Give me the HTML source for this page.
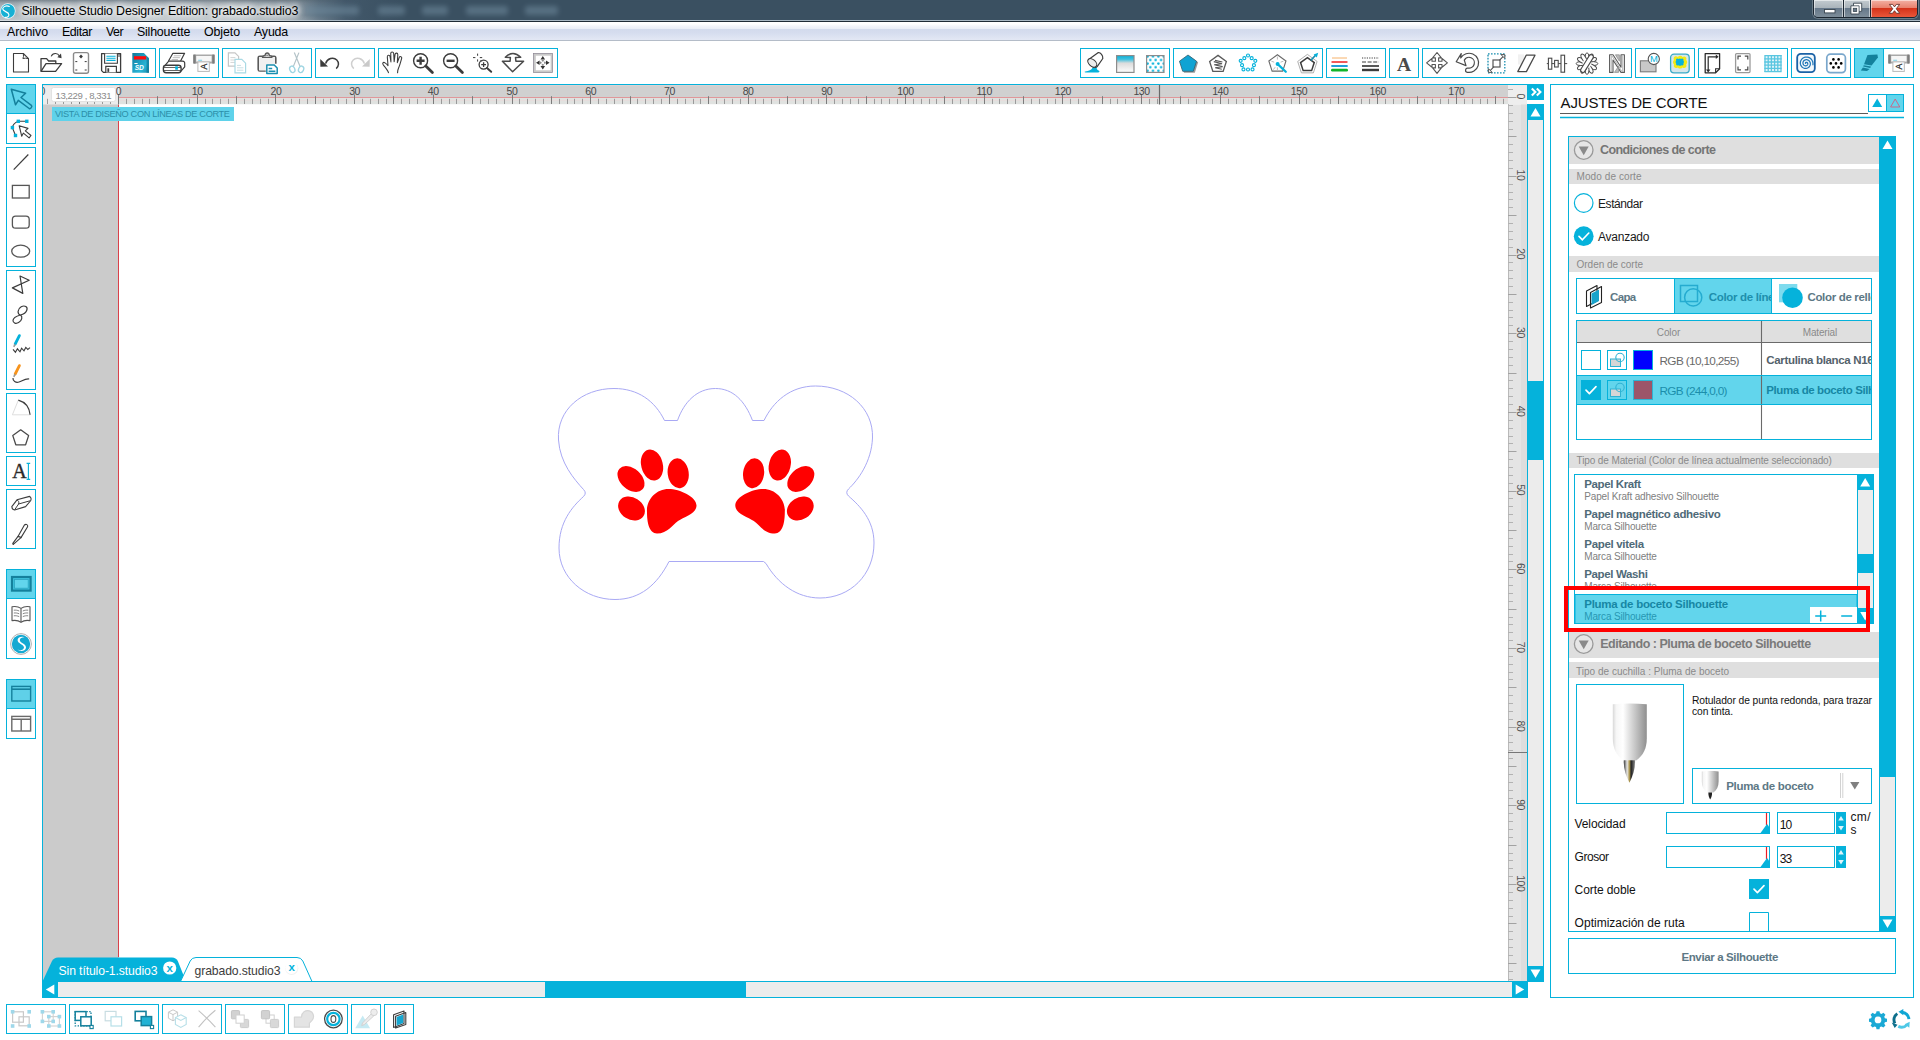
<!DOCTYPE html>
<html lang="es">
<head>
<meta charset="utf-8">
<title>Silhouette Studio Designer Edition: grabado.studio3</title>
<style>
*{box-sizing:border-box;margin:0;padding:0}
html,body{width:1920px;height:1040px;overflow:hidden;background:#fff;font-family:"Liberation Sans",sans-serif;color:#000}
.abs{position:absolute}
#titlebar{position:absolute;left:0;top:0;width:1920px;height:20px;background:linear-gradient(90deg,#aeb7bd 0,#b9c1c6 120px,#b0b9bf 240px,#8c9aa4 292px,#5b7080 318px,#42586a 345px,#3a5061 400px,#3a5061 100%);overflow:hidden}
#titlebar .shade{position:absolute;left:0;top:0;width:400px;height:20px;background:linear-gradient(180deg,rgba(70,85,98,.55) 0,rgba(90,105,118,.25) 3px,rgba(255,255,255,0) 7px,rgba(255,255,255,0) 15px,rgba(255,255,255,.12) 18px,rgba(255,255,255,.18) 20px);-webkit-mask-image:linear-gradient(90deg,#000 0,#000 280px,transparent 360px);mask-image:linear-gradient(90deg,#000 0,#000 280px,transparent 360px)}
#titlebar .ttl{position:absolute;left:21.500px;top:3.700px;font-size:12.400px;letter-spacing:-.14px;color:#000;white-space:nowrap;text-shadow:0 0 5px #fff,0 0 7px #fff,0 0 9px #fff,0 0 12px rgba(255,255,255,.8)}
#titlebar .blob{position:absolute;top:6px;height:9px;background:#6f8a9d;filter:blur(2.500px);opacity:.55;border-radius:3px}
#tline{position:absolute;left:0;top:20px;width:1920px;height:2px;background:linear-gradient(180deg,#a9b8c3 0,#a9b8c3 50%,#1f2b35 50%,#1f2b35 100%)}
#tline2{position:absolute;left:0;top:20px;width:330px;height:1px;background:linear-gradient(90deg,#d5dbdf 0,#d5dbdf 250px,#a9b8c3 100%)}
#menubar{position:absolute;left:0;top:22px;width:1920px;height:19px;background:linear-gradient(180deg,#ffffff 0,#ffffff 2px,#f3f5fa 4px,#e9edf6 7px,#d3dbed 7.500px,#d6ddef 11px,#e2e7f4 17.500px,#b4bcc8 18px,#b4bcc8 19px)}
#menubar span{position:absolute;top:3.100px;font-size:12.400px;letter-spacing:-.1px;white-space:nowrap}
#wc{position:absolute;left:1813px;top:-1px;width:105px;height:19px;border:1px solid #1b2732;border-radius:0 0 5px 5px;overflow:hidden;box-shadow:0 0 0 1px rgba(255,255,255,.25)}
#wc div{position:absolute;top:0;height:18px}
.wb{background:linear-gradient(180deg,#c3cbd0 0,#a9b3ba 8px,#66788a 8.500px,#7e8e9a 17px);box-shadow:inset 0 0 0 1px rgba(255,255,255,.55)}
.wx{background:linear-gradient(180deg,#f3b1a4 0,#e8806c 8px,#d4331a 8.500px,#e9573a 17px);box-shadow:inset 0 0 0 1px rgba(255,255,255,.5)}
.grp{position:absolute;border:1px solid #05b2db;background:#fff}
.ic{position:absolute;width:30px;height:30px}
.hl{background:#62d5ec;box-shadow:inset 0 0 0 1px #05b2db}
svg{display:block}
.ic svg{overflow:visible}
</style>
</head>
<body>
<!-- TITLE BAR -->
<div id="titlebar">
  <div class="shade"></div>
  <div class="blob" style="left:305px;width:54px"></div><div class="blob" style="left:378px;width:27px"></div><div class="blob" style="left:422px;width:26px"></div><div class="blob" style="left:466px;width:42px"></div><div class="blob" style="left:525px;width:33px"></div>
  <div class="ttl">Silhouette Studio Designer Edition: grabado.studio3</div>
  <svg class="abs" style="left:0;top:0" width="20" height="20" viewBox="0 0 20 20"><circle cx="7.900" cy="11" r="7.700" fill="#eafafd"/><circle cx="7.900" cy="11" r="7" fill="#16b0d4"/><path d="M9.300 6.400c-2.600-1.200-6.400-.2-6.600 2.400-.2 3 6 2.600 6.200 5.800.2 1.800-1.600 3-3.600 2.800" fill="none" stroke="#fff" stroke-width="1.100" stroke-linecap="round"/></svg>
</div>
<div id="tline"></div><div id="tline2"></div>
<div id="wc"><div class="wb" style="left:0;width:29px"></div><div style="left:29px;width:1px;background:#1b2732"></div><div class="wb" style="left:30px;width:26px"></div><div style="left:56px;width:1px;background:#1b2732"></div><div class="wx" style="left:57px;width:47px"></div>
<svg class="abs" style="left:0;top:0" width="104" height="18" viewBox="0 0 104 18"><rect x="10.500" y="9.500" width="10.500" height="3.400" fill="#fff" stroke="#3a4650" stroke-width=".9"/><path d="M39.500 3.200h8.200v8.200h-2.600v2.600h-8.200v-8.200h2.600z" fill="#fff" stroke="#3a4650" stroke-width=".9"/><rect x="39.300" y="8.300" width="3.400" height="3.200" fill="#66788a" stroke="#3a4650" stroke-width=".8"/><path d="M39.500 5.800h5.600v5.600" fill="none" stroke="#3a4650" stroke-width=".8"/><path d="M75.400 4.400h3.200l1.900 2.500 1.900-2.500h3.200l-3.400 4.400 3.500 4.500h-3.200l-2-2.600-2 2.600h-3.200l3.500-4.500z" fill="#fff" stroke="#5a2a24" stroke-width=".8" stroke-linejoin="round"/></svg></div>
<!-- MENU BAR -->
<div id="menubar">
  <span style="left:7px;letter-spacing:-.05px">Archivo</span><span style="left:62px;letter-spacing:-.4px">Editar</span><span style="left:106px;letter-spacing:-.5px">Ver</span><span style="left:137px;letter-spacing:-.2px">Silhouette</span><span style="left:204px;letter-spacing:-.09px">Objeto</span><span style="left:254px;letter-spacing:-.18px">Ayuda</span>
</div>
<div class="grp" style="left:6px;top:48px;width:150px;height:30px"><div class="ic" style="left:-1px;top:-1px"><svg width="30" height="30" viewBox="0 0 30 30"><path d="M7.500 5.500h9.800l5.200 5.200v13.300h-15z" fill="#fff" stroke="#3c3c3c" stroke-width="1.100" stroke-linejoin="round"/><path d="M17.300 5.500q.6 3.400-.4 5 2.600-.800 5.600.2" fill="none" stroke="#3c3c3c" stroke-width="1"/></svg></div><div class="ic" style="left:29px;top:-1px"><svg width="30" height="30" viewBox="0 0 30 30"><path d="M5 23.3V10.6h5.6l2 2.4h7.2v2.6" fill="none" stroke="#3c3c3c" stroke-width="1.3" stroke-linejoin="round"/><path d="M5 23.3l5-7.7h15.6l-6 7.7z" fill="#fff" stroke="#3c3c3c" stroke-width="1.3" stroke-linejoin="round"/><path d="M15.2 8.4c1.6-3.6 6.4-3.8 8.2-.4" fill="none" stroke="#3c3c3c" stroke-width="1.1"/><path d="M21.3 9.3l4.3.9-.6-4.6z" fill="#3c3c3c"/></svg></div><div class="ic" style="left:59px;top:-1px"><svg width="30" height="30" viewBox="0 0 30 30"><rect x="7.5" y="4.6" width="15" height="20.6" rx="2" fill="#fff" stroke="#8a8a8a" stroke-width="1.4"/><path d="M15 6.6l1.9 1.9-1.9 1.9-1.9-1.9z" fill="#3c3c3c"/><path d="M9.3 13.6h2M18.7 13.6h2M9.3 22h2M18.7 22h2" stroke="#3c3c3c" stroke-width="1"/></svg></div><div class="ic" style="left:89px;top:-1px"><svg width="30" height="30" viewBox="0 0 30 30"><path d="M5.6 5.6h19v18.8h-17.2l-1.8-1.8z" fill="#fff" stroke="#3c3c3c" stroke-width="1.3" stroke-linejoin="round"/><path d="M8.6 5.6v9.6h12.8v-9.6" fill="#fff" stroke="#3c3c3c" stroke-width="1.1"/><path d="M10.4 8.2h9.2M10.4 10.3h9.2M10.4 12.4h9.2" stroke="#05b2db" stroke-width="1.1"/><path d="M9.8 24.4v-6h10.6v6" fill="#fff" stroke="#3c3c3c" stroke-width="1.2"/><path d="M12.3 20.3v3.6" stroke="#3c3c3c" stroke-width="1.8"/><path d="M23 6v3" stroke="#3c3c3c" stroke-width="1"/></svg></div><div class="ic" style="left:119px;top:-1px"><svg width="30" height="30" viewBox="0 0 30 30"><defs><linearGradient id="sdg" x1="0" y1="0" x2="1" y2="1"><stop offset="0" stop-color="#12789a"/><stop offset=".45" stop-color="#1f9fc2"/><stop offset=".7" stop-color="#2ab6d6"/><stop offset="1" stop-color="#1688aa"/></linearGradient></defs><path d="M6.300 5.100h11.600l5.100 5.100v14.500h-16.700z" fill="url(#sdg)"/><path d="M20.600 8.200l2.400 2v14.500h-2.400z" fill="#117a9a" opacity=".75"/><rect x="8" y="8.200" width="12.200" height="3.300" fill="#ff0a0a"/><path d="M8.400 15.500h3.200" stroke="#fff" stroke-width="1"/><text x="8.700" y="22.200" font-family="Liberation Sans,sans-serif" font-weight="700" font-style="italic" font-size="6.600" fill="#fff" letter-spacing="-.1">SD</text></svg></div></div>
<div class="grp" style="left:159px;top:48px;width:60px;height:30px"><div class="ic" style="left:-1px;top:-1px"><svg width="30" height="30" viewBox="0 0 30 30"><path d="M9.5 13L13.9 5.3H25.6L21.6 13" fill="#fff" stroke="#3c3c3c" stroke-width="1.2" stroke-linejoin="round"/><path d="M14.8 7.8h7.2M13.7 9.7h7.200M12.600 11.600h6.400" stroke="#b4b4b4" stroke-width=".9"/><path d="M6.300 17.200L9.700 13.200H23.400Q26 13.300 25.700 15.700V18.800L22 23.200" fill="#fff" stroke="#3c3c3c" stroke-width="1.200" stroke-linejoin="round"/><path d="M4.400 19.900q0-2.700 2.700-2.700h12.300q2.700 0 2.700 2.700v2.200q0 2.700-2.700 2.700h-12.300q-2.700 0-2.700-2.700z" fill="#fff" stroke="#3c3c3c" stroke-width="1.400"/><path d="M4.800 19.500h17M4.800 22.500h17" stroke="#3c3c3c" stroke-width=".8"/><rect x="16.200" y="18.300" width="2.700" height="3.400" fill="#05b2db"/></svg></div><div class="ic" style="left:29px;top:-1px"><svg width="30" height="30" viewBox="0 0 30 30"><rect x="4.300" y="6.600" width="21.300" height="9" rx=".8" fill="#a9a9a9"/><rect x="4.300" y="6.600" width="2.300" height="9" fill="#7d7d7d"/><rect x="23.300" y="6.600" width="2.300" height="9" fill="#7d7d7d"/><rect x="7.200" y="8" width="15.400" height="5.600" fill="#f6f6f6"/><rect x="9.200" y="11.700" width="3.900" height="1.200" fill="#8fd8ea"/><rect x="8.900" y="13.900" width="11.400" height="9.500" fill="#fff" stroke="#b8b8b8" stroke-width="1"/><text transform="translate(17.800 21.400) rotate(-90)" font-family="Liberation Sans,sans-serif" font-size="8.800" fill="#2e2e2e" stroke="#2e2e2e" stroke-width=".3">A</text></svg></div></div>
<div class="grp" style="left:222px;top:48px;width:90px;height:30px"><div class="ic" style="left:-1px;top:-1px"><svg width="30" height="30" viewBox="0 0 30 30"><path d="M6.4 4.8h6.6l3.6 3.6v9.8h-10.2z" fill="#fff" stroke="#c6c6c6" stroke-width="1.2"/><path d="M8.4 9.6h5M8.4 12h6M8.4 14.4h6" stroke="#d4d4d4" stroke-width="1"/><path d="M13 11.4h6.8l3.8 3.8v9.6h-10.6z" fill="#fff" stroke="#a9d9e4" stroke-width="1.2"/><path d="M15 17.4h4M15 19.8h6.4M15 22.2h6.4" stroke="#c9dfe4" stroke-width="1"/></svg></div><div class="ic" style="left:29px;top:-1px"><svg width="30" height="30" viewBox="0 0 30 30"><path d="M12 8.2h-4.2q-1.6 0-1.6 1.6v11.6q0 1.6 1.6 1.6h6" fill="#f2f2f2" stroke="#5a5a5a" stroke-width="1.6"/><path d="M18.6 8.2h3.6q1.6 0 1.6 1.6v6" fill="none" stroke="#5a5a5a" stroke-width="1.6"/><rect x="7" y="9" width="16" height="13.4" fill="#f0f0f0"/><path d="M10.6 9.4q0-1.8 1.8-1.8h.6q.4-2.6 2.2-2.6t2.2 2.6h.6q1.8 0 1.8 1.8z" fill="#fff" stroke="#5a5a5a" stroke-width="1.4"/><path d="M14.2 7.2h2" stroke="#5a5a5a" stroke-width="1"/><path d="M14.8 17h7.4l3 3v5.6h-10.4z" fill="#fff" stroke="#1a8fb0" stroke-width="1.5" stroke-linejoin="round"/><path d="M16.6 20.6h3.6M16.6 23.2h6.8" stroke="#1a8fb0" stroke-width="1.5"/></svg></div><div class="ic" style="left:59px;top:-1px"><svg width="30" height="30" viewBox="0 0 30 30"><path d="M12.300 4.600l5.800 14M16.900 4.600l-5.600 14" stroke="#b4c3c8" stroke-width="1.200" fill="none"/><ellipse cx="10.300" cy="21.300" rx="2.500" ry="3.300" fill="none" stroke="#9fd5e2" stroke-width="1.300" transform="rotate(-25 10.300 21.300)"/><ellipse cx="19.100" cy="21.300" rx="2.500" ry="3.300" fill="none" stroke="#9fd5e2" stroke-width="1.300" transform="rotate(25 19.100 21.300)"/></svg></div></div>
<div class="grp" style="left:315px;top:48px;width:60px;height:30px"><div class="ic" style="left:-1px;top:-1px"><svg width="30" height="30" viewBox="0 0 30 30"><path d="M10.6 15.6c1.6-5.2 7.8-7 11.2-3.6 2.4 2.4 2.2 6.2-.6 8.6" fill="none" stroke="#3c3c3c" stroke-width="1.5"/><path d="M5.2 11l.2 7.8 7.6-.4z" fill="#3c3c3c"/></svg></div><div class="ic" style="left:29px;top:-1px"><svg width="30" height="30" viewBox="0 0 30 30"><path d="M19.4 15.6c-1.6-5.2-7.8-7-11.2-3.6-2.4 2.4-2.2 6.2.6 8.6" fill="none" stroke="#cfcfcf" stroke-width="1.5"/><path d="M24.8 11l-.2 7.8-7.6-.4z" fill="#c9c9c9"/></svg></div></div>
<div class="grp" style="left:378px;top:48px;width:180px;height:30px"><div class="ic" style="left:-1px;top:-1px"><svg width="30" height="30" viewBox="0 0 30 30"><path d="M10.4 24.6c-.6-2.2-2-3.8-4.4-6.600-1.400-1.600-.2-3 1.400-2 1 .6 1.800 1.400 2.600 2.400l-.6-7.600c-.2-1.800 2-2 2.400-.4l.8 4.800-.2-7.400c0-1.800 2.400-1.800 2.600 0l.4 7.200.8-6.400c.2-1.600 2.400-1.400 2.400.2l-.4 7 1.600-4.400c.6-1.600 2.600-.8 2.200.6-1 3.600-1.600 6.400-2.800 8.800-.6 1.200-.8 2.400-.8 3.800" fill="#fff" stroke="#3c3c3c" stroke-width=".95" stroke-linejoin="round" stroke-linecap="round" transform="translate(-1.400 -3.400) scale(1.140)"/></svg></div><div class="ic" style="left:29px;top:-1px"><svg width="30" height="30" viewBox="0 0 30 30"><circle cx="12.6" cy="12.8" r="7" fill="#fff" stroke="#3c3c3c" stroke-width="1.4"/><path d="M17.8 18l6.600 6.600" stroke="#3c3c3c" stroke-width="2.8" stroke-linecap="round"/><path d="M8.600 12.8h8M12.6 8.800v8" stroke="#3c3c3c" stroke-width="2.4"/></svg></div><div class="ic" style="left:59px;top:-1px"><svg width="30" height="30" viewBox="0 0 30 30"><circle cx="12.6" cy="12.8" r="7" fill="#fff" stroke="#3c3c3c" stroke-width="1.4"/><path d="M17.8 18l6.600 6.600" stroke="#3c3c3c" stroke-width="2.8" stroke-linecap="round"/><path d="M8.600 12.8h8" stroke="#3c3c3c" stroke-width="2.4"/></svg></div><div class="ic" style="left:89px;top:-1px"><svg width="30" height="30" viewBox="0 0 30 30"><circle cx="15.600" cy="16.600" r="4.500" fill="#fff" stroke="#3c3c3c" stroke-width="1.300"/><path d="M19 20l4.200 3.800" stroke="#3c3c3c" stroke-width="2" stroke-linecap="round"/><path d="M13.200 16.600h4.800M15.600 14.200v4.800" stroke="#3c3c3c" stroke-width="1.300"/><path d="M9.600 5.600v2.200M9.600 11.400v2.200M5 9.600h2.400M11.800 9.600h2.400M12.600 12.400l1.200 1.200" stroke="#3c3c3c" stroke-width="1"/></svg></div><div class="ic" style="left:119px;top:-1px"><svg width="30" height="30" viewBox="0 0 30 30"><path d="M7.3 9.3Q15 1.6 22.7 9.3L17.5 9.5L17.9 13.2L25.6 13.2L14.6 23.8L4.4 13.2L12.1 13.2L12.4 9.5Z" fill="#fff" stroke="#4a4a4a" stroke-width="1.5" stroke-linejoin="round"/></svg></div><div class="ic" style="left:149px;top:-1px"><svg width="30" height="30" viewBox="0 0 30 30"><rect x="5.4" y="5.4" width="19.2" height="19.2" fill="#c9c9c9" stroke="#8c8692" stroke-width=".7"/><rect x="7.8" y="7.7" width="14.8" height="14.6" fill="#fff"/><path d="M14.8 8l2.300 3.600h-4.600zM14.800 21.600l2.300-3.600h-4.600zM8 14.800l3.600-2.300v4.600zM21.600 14.800l-3.600-2.300v4.600z" fill="#333"/><path d="M14.800 11.600l1.500 1.100-1.500 1.100-1.500-1.100zM14.800 18l1.500-1.100-1.500-1.100-1.500 1.100zM11.600 14.800l1.100-1.500 1.100 1.500-1.100 1.500zM18 14.800l-1.100-1.500-1.100 1.500 1.100 1.500z" fill="#8a8a8a"/></svg></div></div>
<div class="grp" style="left:1080px;top:48px;width:90px;height:30px"><div class="ic" style="left:-1px;top:-1px"><svg width="30" height="30" viewBox="0 0 30 30"><path d="M5.200 23.600c3.600-.4 6.200-1.600 7.400-3.800l1.400-2.400 3 1.200c-.8 2-.2 3.400 2 4.200 1 .6.400 1.600-1 1.600h-12.400c-1.200 0-1.400-.6-.4-.8z" fill="#05b2db"/><path d="M8.300 11.700l9.700-7c2.600-.6 5.200 3 4.800 5.800l-5.800 8.300c-1.800 1-4 .4-6.200-1.600-2.200-2-3-4-2.500-5.500z" fill="#fff" stroke="#3c3c3c" stroke-width="1.200" stroke-linejoin="round"/><ellipse cx="12.300" cy="14.900" rx="3.300" ry="5.200" transform="rotate(-48 12.300 14.900)" fill="#ececec" stroke="#3c3c3c" stroke-width="1.100"/></svg></div><div class="ic" style="left:29px;top:-1px"><svg width="30" height="30" viewBox="0 0 30 30"><defs><linearGradient id="gr1" x1="0" y1="0" x2="0" y2="1"><stop offset="0" stop-color="#05b2db"/><stop offset=".22" stop-color="#3fc0de"/><stop offset=".45" stop-color="#dcdcdc"/><stop offset="1" stop-color="#fdfdfd"/></linearGradient></defs><rect x="6.600" y="7.600" width="17.400" height="16.800" fill="url(#gr1)" stroke="#8c8c8c" stroke-width="1.200"/></svg></div><div class="ic" style="left:59px;top:-1px"><svg width="30" height="30" viewBox="0 0 30 30"><defs><pattern id="pd1" x="6.200" y="7" width="5.400" height="7.200" patternUnits="userSpaceOnUse"><circle cx="1.400" cy="1.400" r="1.250" fill="#05b2db"/><circle cx="4.100" cy="5" r="1.250" fill="#05b2db"/></pattern></defs><rect x="6.600" y="7.600" width="17.400" height="16.800" fill="#fff"/><rect x="6.600" y="7.600" width="17.400" height="16.800" fill="url(#pd1)" stroke="#8c8c8c" stroke-width="1.200"/></svg></div></div>
<div class="grp" style="left:1173px;top:48px;width:150px;height:30px"><div class="ic" style="left:-1px;top:-1px"><svg width="30" height="30" viewBox="0 0 30 30"><path d="M16.40 8.00L25.15 14.36L21.81 24.64L10.99 24.64L7.65 14.36z" fill="#9a9a9a"/><path d="M15.00 7.00L23.56 13.22L20.29 23.28L9.71 23.28L6.44 13.22z" fill="#10a3d3" stroke="#2f5f70" stroke-width=".8"/></svg></div><div class="ic" style="left:29px;top:-1px"><svg width="30" height="30" viewBox="0 0 30 30"><path d="M15.00 7.40L23.37 13.48L20.17 23.32L9.83 23.32L6.63 13.48z" fill="#fff" stroke="#5a5a5a" stroke-width="1.300"/><path d="M10.800 13.600l8.200 2.200-7.800 1 8.400 1.800-7.400 1.200 6.600 1.400M12 12.400l7.400 1.600" fill="none" stroke="#555" stroke-width="1.100"/></svg></div><div class="ic" style="left:59px;top:-1px"><svg width="30" height="30" viewBox="0 0 30 30"><circle cx="15.00" cy="7.50" r="1.500" fill="#fff" stroke="#05b2db" stroke-width="1.150"/><circle cx="18.67" cy="10.14" r="1.500" fill="#fff" stroke="#05b2db" stroke-width="1.150"/><circle cx="22.32" cy="12.82" r="1.500" fill="#fff" stroke="#05b2db" stroke-width="1.150"/><circle cx="20.94" cy="17.13" r="1.500" fill="#fff" stroke="#05b2db" stroke-width="1.150"/><circle cx="19.53" cy="21.43" r="1.500" fill="#fff" stroke="#05b2db" stroke-width="1.150"/><circle cx="15.00" cy="21.45" r="1.500" fill="#fff" stroke="#05b2db" stroke-width="1.150"/><circle cx="10.47" cy="21.43" r="1.500" fill="#fff" stroke="#05b2db" stroke-width="1.150"/><circle cx="9.06" cy="17.13" r="1.500" fill="#fff" stroke="#05b2db" stroke-width="1.150"/><circle cx="7.68" cy="12.82" r="1.500" fill="#fff" stroke="#05b2db" stroke-width="1.150"/><circle cx="11.33" cy="10.14" r="1.500" fill="#fff" stroke="#05b2db" stroke-width="1.150"/></svg></div><div class="ic" style="left:89px;top:-1px"><svg width="30" height="30" viewBox="0 0 30 30"><path d="M14.40 6.80L22.96 13.02L19.69 23.08L9.11 23.08L5.84 13.02z" fill="#fff" stroke="#6a6a6a" stroke-width="1.100"/><path d="M14.400 8.600v3M8.400 13.200l2.800 1M20.400 13.200l-2.800 1M10.400 21.600l1.800-2.400M14.400 22.400v-3" stroke="#bdbdbd" stroke-width="1"/><circle cx="14.600" cy="16" r="2" fill="#05b2db"/><path d="M16 17.400l6.800 6.400" stroke="#05b2db" stroke-width="2.200" stroke-linecap="round"/></svg></div><div class="ic" style="left:119px;top:-1px"><svg width="30" height="30" viewBox="0 0 30 30"><path d="M14.40 6.40L24.10 13.45L20.40 24.85L8.40 24.85L4.70 13.45z" fill="#fff" stroke="#9a9a9a" stroke-width=".8"/><path d="M14.40 9.60L21.25 14.58L18.63 22.62L10.17 22.62L7.55 14.58z" fill="#fff" stroke="#3c3c3c" stroke-width="1.500"/><path d="M17.800 12.400l5.200-5.600" stroke="#1a8fb0" stroke-width="1.600"/><path d="M20.600 6.400l4.600-1.600-1.400 4.800z" fill="#05b2db"/></svg></div></div>
<div class="grp" style="left:1326px;top:48px;width:60px;height:30px"><div class="ic" style="left:-1px;top:-1px"><svg width="30" height="30" viewBox="0 0 30 30"><path d="M6 10h15" stroke="#f6b26b" stroke-width="1"/><path d="M6 14h15" stroke="#ee2222" stroke-width="1.400" stroke-linecap="round"/><path d="M6 18h15" stroke="#1f9fd9" stroke-width="1.800" stroke-linecap="round"/><path d="M6.400 22.200h14.200" stroke="#12b52a" stroke-width="2.800" stroke-linecap="round"/></svg></div><div class="ic" style="left:29px;top:-1px"><svg width="30" height="30" viewBox="0 0 30 30"><path d="M6 10h17" stroke="#3c3c3c" stroke-width="1" stroke-dasharray="1.200 1.200"/><path d="M6 14h17" stroke="#3c3c3c" stroke-width="1.200" stroke-dasharray="4 1.600"/><path d="M6 18h17" stroke="#3c3c3c" stroke-width="1.700"/><path d="M6 22h17" stroke="#3c3c3c" stroke-width="2.400"/></svg></div></div>
<div class="grp" style="left:1389px;top:48px;width:30px;height:30px"><div class="ic" style="left:-1px;top:-1px"><svg width="30" height="30" viewBox="0 0 30 30"><text x="15" y="22.800" text-anchor="middle" font-family="Liberation Serif,serif" font-weight="700" font-size="19.500" fill="#4a4a4a">A</text></svg></div></div>
<div class="grp" style="left:1422px;top:48px;width:210px;height:30px"><div class="ic" style="left:-1px;top:-1px"><svg width="30" height="30" viewBox="0 0 30 30"><path d="M15 4.500L19.400 9.900H16.600V13.300H20V10.500L25.400 14.900L20 19.300V16.500H16.600V19.900H19.400L15 25.300L10.600 19.900H13.400V16.500H10V19.300L4.600 14.900L10 10.500V13.300H13.400V9.900H10.600Z" fill="#fff" stroke="#555" stroke-width="1.100" stroke-linejoin="round"/></svg></div><div class="ic" style="left:29px;top:-1px"><svg width="30" height="30" viewBox="0 0 30 30"><path d="M8.700 10A9.600 9.600 0 1 1 15.300 24.300A2.100 2.100 0 0 1 16.100 20.100A5.400 5.400 0 1 0 12.300 12.100L14 17.600L4.200 13.800L9.200 5.600z" fill="#fff" stroke="#4a4a4a" stroke-width="1.200" stroke-linejoin="round"/></svg></div><div class="ic" style="left:59px;top:-1px"><svg width="30" height="30" viewBox="0 0 30 30"><rect x="6" y="5.800" width="16.800" height="19" fill="#fff" stroke="#1a8fb0" stroke-width="1.300" stroke-dasharray="1.600 1.400"/><rect x="11" y="12" width="7" height="7" fill="#fff" stroke="#555" stroke-width="1.200"/><path d="M17.400 12.400l4.600-4.800M12 18.600l-4.800 5" stroke="#555" stroke-width="1.100"/><path d="M19 6.600h3.800v3.800zM6.400 20.600v3.800h3.800z" fill="#fff" stroke="#555" stroke-width="1"/></svg></div><div class="ic" style="left:89px;top:-1px"><svg width="30" height="30" viewBox="0 0 30 30"><rect x="6" y="6.400" width="6" height="10" fill="#f1f1f1"/><path d="M14.200 7.200h8.800l-8.600 16.400h-8.600z" fill="#fff" stroke="#4a4a4a" stroke-width="1.300" stroke-linejoin="round"/></svg></div><div class="ic" style="left:119px;top:-1px"><svg width="30" height="30" viewBox="0 0 30 30"><path d="M4.800 15.600h20.400" stroke="#4a4a4a" stroke-width="1"/><rect x="6.400" y="10.200" width="3.400" height="11" fill="#fff" stroke="#4a4a4a" stroke-width="1.100"/><rect x="12.600" y="12.400" width="3.600" height="6.600" fill="#fff" stroke="#4a4a4a" stroke-width="1.100"/><rect x="19" y="7.200" width="3.600" height="17" fill="#fff" stroke="#4a4a4a" stroke-width="1.100"/></svg></div><div class="ic" style="left:149px;top:-1px"><svg width="30" height="30" viewBox="0 0 30 30"><ellipse cx="15" cy="9.400" rx="2" ry="4.600" transform="rotate(0 15 15.600)" fill="#fff" stroke="#4a4a4a" stroke-width="1"/><ellipse cx="15" cy="9.400" rx="2" ry="4.600" transform="rotate(30 15 15.600)" fill="#fff" stroke="#4a4a4a" stroke-width="1"/><ellipse cx="15" cy="9.400" rx="2" ry="4.600" transform="rotate(60 15 15.600)" fill="#fff" stroke="#4a4a4a" stroke-width="1"/><ellipse cx="15" cy="9.400" rx="2" ry="4.600" transform="rotate(90 15 15.600)" fill="#fff" stroke="#4a4a4a" stroke-width="1"/><ellipse cx="15" cy="9.400" rx="2" ry="4.600" transform="rotate(120 15 15.600)" fill="#fff" stroke="#4a4a4a" stroke-width="1"/><ellipse cx="15" cy="9.400" rx="2" ry="4.600" transform="rotate(150 15 15.600)" fill="#fff" stroke="#4a4a4a" stroke-width="1"/><ellipse cx="15" cy="9.400" rx="2" ry="4.600" transform="rotate(180 15 15.600)" fill="#fff" stroke="#4a4a4a" stroke-width="1"/><ellipse cx="15" cy="9.400" rx="2" ry="4.600" transform="rotate(210 15 15.600)" fill="#fff" stroke="#4a4a4a" stroke-width="1"/><ellipse cx="15" cy="9.400" rx="2" ry="4.600" transform="rotate(240 15 15.600)" fill="#fff" stroke="#4a4a4a" stroke-width="1"/><ellipse cx="15" cy="9.400" rx="2" ry="4.600" transform="rotate(270 15 15.600)" fill="#fff" stroke="#4a4a4a" stroke-width="1"/><ellipse cx="15" cy="9.400" rx="2" ry="4.600" transform="rotate(300 15 15.600)" fill="#fff" stroke="#4a4a4a" stroke-width="1"/><ellipse cx="15" cy="9.400" rx="2" ry="4.600" transform="rotate(330 15 15.600)" fill="#fff" stroke="#4a4a4a" stroke-width="1"/><circle cx="15" cy="15.600" r="4.400" fill="#fff"/><rect x="12.800" y="5.600" width="4.400" height="20" rx="2.200" transform="rotate(32 15 15.600)" fill="#fff" stroke="#4a4a4a" stroke-width="1.100"/></svg></div><div class="ic" style="left:179px;top:-1px"><svg width="30" height="30" viewBox="0 0 30 30"><path d="M7.600 24.400v-17.600h3.400l8 12.400v-12.400h3.400v17.600h-3.400l-8-12.400v12.400z" fill="#fff" stroke="#5a5a5a" stroke-width="1.100" stroke-linejoin="round"/><path d="M13.400 6.800h4v6.400zM12.400 24.400h4.200v-6.200z" fill="#bdbdbd" stroke="#8a8a8a" stroke-width=".7"/><path d="M9.300 7.400v16.400M20.700 7.400v16.400M10 8l10 15.600" stroke="#9a9a9a" stroke-width=".7" fill="none"/></svg></div></div>
<div class="grp" style="left:1635px;top:48px;width:60px;height:30px"><div class="ic" style="left:-1px;top:-1px"><svg width="30" height="30" viewBox="0 0 30 30"><path d="M5.400 12.600h12.400v11.200h-17.600 0h5.200z" fill="none"/><rect x="5.400" y="12.800" width="15.600" height="11" fill="#c8c8c8" stroke="#7a7a7a" stroke-width="1.100"/><circle cx="18.800" cy="11" r="5.600" fill="#fff" stroke="#555" stroke-width="1.100"/><text x="18.800" y="14.400" text-anchor="middle" font-family="Liberation Sans,sans-serif" font-size="9.400" fill="#05b2db">M</text></svg></div><div class="ic" style="left:29px;top:-1px"><svg width="30" height="30" viewBox="0 0 30 30"><rect x="5.600" y="6.200" width="18.600" height="18.600" rx="3.400" fill="#d6e6ea" stroke="#38a8c6" stroke-width="1.300"/><path d="M9 12c-1.400-3 2-4.800 3.800-3 1.400-1.600 3.600-1.600 4.800 0 2-1.600 4.800.2 3.600 3 1.400 1.200 1.400 3.200 0 4.400 1.200 2.800-1.800 4.600-3.800 3-1.200 1.600-3.400 1.600-4.600 0-2 1.600-5-.2-3.800-3-1.400-1.200-1.400-3.200 0-4.400z" fill="#f3ea12"/><path d="M11.200 12.600c-.8-1.800 1.200-2.800 2.400-1.600.8-.8 1.800-.8 2.600 0 1.200-1 2.800 0 2.200 1.600.8.800.8 2.200 0 3 .6 1.600-1 2.600-2.200 1.600-.8.800-1.800.8-2.600 0-1.200 1-3 0-2.400-1.600-.8-.8-.8-2.200 0-3z" fill="#05b2db"/></svg></div></div>
<div class="grp" style="left:1698px;top:48px;width:90px;height:30px"><div class="ic" style="left:-1px;top:-1px"><svg width="30" height="30" viewBox="0 0 30 30"><path d="M7.200 5.600h14.400v15.200l-4 4h-10.400z" fill="#fff" stroke="#2c2c2c" stroke-width="1.300" stroke-linejoin="round"/><path d="M17.600 24.800v-4h4" fill="none" stroke="#2c2c2c" stroke-width="1.100"/><path d="M10.200 22.600v-13.800h8.600" fill="none" stroke="#2c2c2c" stroke-width="1.200"/><path d="M17.800 6.600l2.800 2.200-2.800 2.200zM8 21.600l2.200 2.800 2.200-2.800z" fill="#2c2c2c"/></svg></div><div class="ic" style="left:29px;top:-1px"><svg width="30" height="30" viewBox="0 0 30 30"><rect x="7.600" y="5.600" width="14.400" height="19" rx="1" fill="#fff" stroke="#9a9a9a" stroke-width="1.300"/><path d="M10 11.400v-3.200h3M16.800 8.200h3v3.200M10 18.600v3.200h3M16.800 21.800h3v-3.200" fill="none" stroke="#4a4a4a" stroke-width="1.200"/></svg></div><div class="ic" style="left:59px;top:-1px"><svg width="30" height="30" viewBox="0 0 30 30"><rect x="6.400" y="7" width="17.200" height="17" fill="#e4f5fa"/><path d="M7.0 7v17M6.400 7.6h17.200" stroke="#5ac6e0" stroke-width="1.300"/><path d="M10.2 7v17M6.400 10.8h17.200" stroke="#5ac6e0" stroke-width="1.300"/><path d="M13.4 7v17M6.400 14.0h17.200" stroke="#5ac6e0" stroke-width="1.300"/><path d="M16.6 7v17M6.400 17.2h17.200" stroke="#5ac6e0" stroke-width="1.300"/><path d="M19.8 7v17M6.400 20.4h17.200" stroke="#5ac6e0" stroke-width="1.300"/><path d="M23.0 7v17M6.400 23.6h17.200" stroke="#5ac6e0" stroke-width="1.300"/></svg></div></div>
<div class="grp" style="left:1791px;top:48px;width:60px;height:30px"><div class="ic" style="left:-1px;top:-1px"><svg width="30" height="30" viewBox="0 0 30 30"><rect x="6.200" y="5.800" width="17.600" height="18.400" rx="3.600" fill="#f4f9fc" stroke="#1b62a6" stroke-width="1.800"/><path d="M15.00 15.40 L14.95 15.45 L14.87 15.48 L14.79 15.49 L14.70 15.47 L14.62 15.42 L14.55 15.34 L14.50 15.23 L14.47 15.11 L14.47 14.97 L14.51 14.83 L14.58 14.68 L14.69 14.55 L14.83 14.43 L15.01 14.34 L15.21 14.29 L15.43 14.27 L15.67 14.30 L15.91 14.38 L16.13 14.52 L16.34 14.70 L16.52 14.93 L16.65 15.20 L16.74 15.50 L16.76 15.83 L16.73 16.17 L16.63 16.50 L16.46 16.83 L16.22 17.13 L15.92 17.39 L15.57 17.60 L15.17 17.74 L14.74 17.81 L14.30 17.79 L13.85 17.70 L13.41 17.51 L13.00 17.24 L12.64 16.90 L12.34 16.48 L12.11 16.00 L11.98 15.47 L11.94 14.92 L12.00 14.36 L12.17 13.80 L12.45 13.27 L12.82 12.79 L13.29 12.37 L13.83 12.04 L14.44 11.82 L15.09 11.70 L15.77 11.70 L16.45 11.83 L17.10 12.08 L17.71 12.45 L18.26 12.94 L18.71 13.53 L19.06 14.20 L19.28 14.94 L19.37 15.72 L19.32 16.52 L19.12 17.31 L18.77 18.06 L18.29 18.74 L17.68 19.34 L16.96 19.82 L16.15 20.18 L15.29 20.38 L14.38 20.43 L13.47 20.31 L12.58 20.02 L11.74 19.57 L10.99 18.97 L10.35 18.24 L9.85 17.39 L9.50 16.45 L9.33 15.45 L9.34 14.42 L9.54 13.39 L9.92 12.41 L10.48 11.50 L11.20 10.69 L12.07 10.02 L13.06 9.51 L14.13 9.19 L15.26 9.05 L16.41 9.13 L17.54 9.41 L18.61 9.90 L19.59 10.58 L20.44 11.44 L21.13 12.44 L21.63 13.57 L21.93 14.78 L22.00 16.04 L21.85 17.30" fill="none" stroke="#2278b8" stroke-width="1.250"/></svg></div><div class="ic" style="left:29px;top:-1px"><svg width="30" height="30" viewBox="0 0 30 30"><rect x="5.800" y="6.200" width="18.600" height="18.400" rx="3.600" fill="#fff" stroke="#7aa7cc" stroke-width="1.700"/><circle cx="12.400" cy="11.400" r="1.300"/><circle cx="17.600" cy="11.400" r="1.300"/><circle cx="9.800" cy="15.400" r="1.300"/><circle cx="15" cy="15.400" r="1.300"/><circle cx="20.200" cy="15.400" r="1.300"/><circle cx="12.400" cy="19.400" r="1.300"/><circle cx="17.600" cy="19.400" r="1.300"/></svg></div></div>
<div class="grp" style="left:1854px;top:48px;width:60px;height:30px"><div class="ic hl" style="left:-1px;top:-1px"><svg width="30" height="30" viewBox="0 0 30 30"><path d="M13.500 7L23.400 6.600L23.900 9.600L17.600 17.600L10 16.200Z" fill="#13819c"/><path d="M9.700 17.200L17 18.600L16.200 19.900L9.200 18.500Z" fill="#13819c"/><path d="M8.900 19.500L15.600 20.900L13 23.100L6.800 22.600Z" fill="#13819c"/></svg></div><div class="ic" style="left:29px;top:-1px"><svg width="30" height="30" viewBox="0 0 30 30"><rect x="4.300" y="6.600" width="21.300" height="9" rx=".8" fill="#a9a9a9"/><rect x="4.300" y="6.600" width="2.300" height="9" fill="#7d7d7d"/><rect x="23.300" y="6.600" width="2.300" height="9" fill="#7d7d7d"/><rect x="7.200" y="8" width="15.400" height="5.600" fill="#f6f6f6"/><rect x="9.200" y="11.700" width="3.900" height="1.200" fill="#8fd8ea"/><rect x="8.900" y="13.900" width="11.400" height="9.500" fill="#fff" stroke="#b8b8b8" stroke-width="1"/><text transform="translate(17.800 21.400) rotate(-90)" font-family="Liberation Sans,sans-serif" font-size="8.800" fill="#2e2e2e" stroke="#2e2e2e" stroke-width=".3">A</text></svg></div></div>

<div class="grp" style="left:6px;top:84px;width:30px;height:60px"><div class="ic hl" style="left:-1px;top:-1px"><svg width="30" height="30" viewBox="0 0 30 30"><path d="M5.300 5.300l14.300 4-4.600 4.200 10.400 7.900c1.200 1-.8 3.900-2.200 3.100l-10.900-8.200-2.800 4.500z" fill="none" stroke="#14809c" stroke-width="1.500" stroke-linejoin="round"/></svg></div><div class="ic" style="left:-1px;top:29px"><svg width="30" height="30" viewBox="0 0 30 30"><path d="M20.800 7.300h-8.500c-3.400 1.200-5.400 3.400-5.900 6.300l3.100 7.900" fill="none" stroke="#3c3c3c" stroke-width="1.100"/><rect x="10.600" y="5.600" width="3.400" height="3.400" fill="#05b2db"/><rect x="19.100" y="5.600" width="3.400" height="3.400" fill="#05b2db"/><rect x="4.700" y="11.900" width="3.400" height="3.400" fill="#05b2db"/><rect x="7.800" y="19.800" width="3.400" height="3.400" fill="#05b2db"/><path d="M13.200 11.800l8.800 2.600-2.700 2.400 5.700 4.700-1.900 2.300-5.700-4.700-1.700 3.100z" fill="#fff" stroke="#3c3c3c" stroke-width="1.100" stroke-linejoin="round"/></svg></div></div>
<div class="grp" style="left:6px;top:147px;width:30px;height:120px"><div class="ic" style="left:-1px;top:-1px"><svg width="30" height="30" viewBox="0 0 30 30"><path d="M7.700 22.600l14.600-15.100" stroke="#3c3c3c" stroke-width="1.200"/></svg></div><div class="ic" style="left:-1px;top:29px"><svg width="30" height="30" viewBox="0 0 30 30"><rect x="6.400" y="8.400" width="16.800" height="12.600" fill="#fff" stroke="#555" stroke-width="1.300"/></svg></div><div class="ic" style="left:-1px;top:59px"><svg width="30" height="30" viewBox="0 0 30 30"><rect x="6.400" y="9.200" width="16.800" height="12" rx="3.200" fill="#fff" stroke="#555" stroke-width="1.300"/></svg></div><div class="ic" style="left:-1px;top:89px"><svg width="30" height="30" viewBox="0 0 30 30"><ellipse cx="14.700" cy="14.200" rx="9" ry="6" fill="#fff" stroke="#555" stroke-width="1.300"/></svg></div></div>
<div class="grp" style="left:6px;top:270px;width:30px;height:120px"><div class="ic" style="left:-1px;top:-1px"><svg width="30" height="30" viewBox="0 0 30 30"><path d="M14 6l9.200 4.200-16.800 7.700 10.400 5.500z" fill="none" stroke="#3c3c3c" stroke-width="1.200" stroke-linejoin="round"/></svg></div><div class="ic" style="left:-1px;top:29px"><svg width="30" height="30" viewBox="0 0 30 30"><path d="M14.400 15c-3.400-1-3-6 .8-8.200 3.600-2 6.800.2 5.600 3.400-1 2.800-4.200 4.200-6.400 4.800-3.600 1-7.200 2.400-7.400 5.400-.2 3 3.200 3.600 5.600 2.200 3.400-2 4.400-6 1.800-7.600z" fill="none" stroke="#3c3c3c" stroke-width="1.200"/></svg></div><div class="ic" style="left:-1px;top:59px"><svg width="30" height="30" viewBox="0 0 30 30"><path d="M13.4 5.6l-4.2 8.4" stroke="#05b2db" stroke-width="2.8" stroke-linecap="round"/><path d="M9 14.2l-1.2 2.6" stroke="#999" stroke-width="1.6"/><path d="M7 19.4l2.4 2.8 2-3.400 2.6 3 1.6-3.6 2.4 2.6 1.8-3.4 2 2 2.2-1.8" fill="none" stroke="#3c3c3c" stroke-width="1.100"/></svg></div><div class="ic" style="left:-1px;top:89px"><svg width="30" height="30" viewBox="0 0 30 30"><path d="M13.400 5.600l-4.200 8.400" stroke="#f7941d" stroke-width="2.800" stroke-linecap="round"/><path d="M9 14.200l-1.200 2.600" stroke="#999" stroke-width="1.600"/><path d="M7 18c-.4 3 2.800 5 6 4 3.600-1.200 5.600-3.400 10.200-3" fill="none" stroke="#3c3c3c" stroke-width="1.200"/></svg></div></div>
<div class="grp" style="left:6px;top:393px;width:30px;height:60px"><div class="ic" style="left:-1px;top:-1px"><svg width="30" height="30" viewBox="0 0 30 30"><path d="M12.300 7.200l-5.900 14.600h17.700" fill="none" stroke="#dedede" stroke-width="1"/><path d="M12.300 7.200c6.600 1.800 11 7 11.800 14.600" fill="none" stroke="#3c3c3c" stroke-width="1.200"/></svg></div><div class="ic" style="left:-1px;top:29px"><svg width="30" height="30" viewBox="0 0 30 30"><path d="M14.700 6.800l7.900 5.800-3 9.200h-9.800l-3-9.200z" fill="#fff" stroke="#4a4a4a" stroke-width="1.300" stroke-linejoin="round"/></svg></div></div>
<div class="grp" style="left:6px;top:456px;width:30px;height:30px"><div class="ic" style="left:-1px;top:-1px"><svg width="30" height="30" viewBox="0 0 30 30"><text x="6.2" y="22.2" font-family="Liberation Serif,serif" font-size="20" fill="#2a2a2a" stroke="#2a2a2a" stroke-width=".35">A</text><path d="M22.4 7.4v16M20.6 7.4h3.6M20.6 23.4h3.600" stroke="#05b2db" stroke-width="1.100"/></svg></div></div>
<div class="grp" style="left:6px;top:489px;width:30px;height:60px"><div class="ic" style="left:-1px;top:-1px"><svg width="30" height="30" viewBox="0 0 30 30"><path d="M5.800 17.600l5.200-6.800 12.600-3.400c1.800 1 1.800 3.200.8 4.600l-4.800 5.600-11 3.400c-1.800-.4-2.800-1.800-2.800-3.400z" fill="#fff" stroke="#3c3c3c" stroke-width="1.100" stroke-linejoin="round"/><path d="M11 10.800c1.600.8 2.200 2.400 1.600 4.200l-4 5.800M12.600 15l11.400-3.200" fill="none" stroke="#3c3c3c" stroke-width="1"/></svg></div><div class="ic" style="left:-1px;top:29px"><svg width="30" height="30" viewBox="0 0 30 30"><path d="M18.400 6c1.800-1.400 3.800-.2 3.200 1.800l-6.600 10.800-3-1.200z" fill="#fff" stroke="#3c3c3c" stroke-width="1.100" stroke-linejoin="round"/><path d="M12 17.400l3 1.200-7.400 6.600c-.6.400-1-.2-.8-.8z" fill="#fff" stroke="#3c3c3c" stroke-width="1.100" stroke-linejoin="round"/></svg></div></div>
<div class="grp" style="left:6px;top:569px;width:30px;height:90px"><div class="ic hl" style="left:-1px;top:-1px"><svg width="30" height="30" viewBox="0 0 30 30"><rect x="6" y="8" width="18.600" height="13.600" fill="#3fc2dd" stroke="#14809c" stroke-width="2.200"/><rect x="8.400" y="10.400" width="13.800" height="8.800" fill="#62d5ec" stroke="#2ba3c0" stroke-width=".8"/></svg></div><div class="ic" style="left:-1px;top:29px"><svg width="30" height="30" viewBox="0 0 30 30"><path d="M15 9.400c-2.600-1.800-5.600-2.200-9-1.600v13.800c3.400-.6 6.400-.2 9 1.600 2.600-1.800 5.600-2.200 9-1.600v-13.800c-3.400-.6-6.400-.2-9 1.600z" fill="#fff" stroke="#555" stroke-width="1.100" stroke-linejoin="round"/><path d="M15 9.400v13.800" stroke="#555" stroke-width="1.100"/><path d="M7.800 11.200c1.800-.2 3.600 0 5.400.8M7.800 14c1.800-.2 3.600 0 5.400.8M7.800 16.800c1.800-.2 3.600 0 5.400.8M22.200 11.200c-1.800-.2-3.600 0-5.400.8M22.200 14c-1.800-.2-3.600 0-5.400.8M22.200 16.800c-1.800-.2-3.600 0-5.400.8" fill="none" stroke="#777" stroke-width=".9"/></svg></div><div class="ic" style="left:-1px;top:59px"><svg width="30" height="30" viewBox="0 0 30 30"><circle cx="15" cy="15" r="10.400" fill="#fff" stroke="#9a9a9a" stroke-width=".8"/><circle cx="15" cy="15" r="9.200" fill="#14a9d2"/><path d="M19.400 8.400c-3.400-1.600-7.400-.6-7.800 2.400-.5 4 6.600 4.400 6.400 7.800-.2 2.400-3.400 3.400-6.600 2 2.400 2.200 8 1.800 8.600-1.800.6-4.200-6.400-4.800-6.200-7.800.2-2 2.800-3 5.600-2.600z" fill="#fff"/></svg></div></div>
<div class="grp" style="left:6px;top:679px;width:30px;height:60px"><div class="ic hl" style="left:-1px;top:-1px"><svg width="30" height="30" viewBox="0 0 30 30"><rect x="5.800" y="7.400" width="18.800" height="14.600" fill="#5fd0e8" stroke="#14809c" stroke-width="1.400"/><path d="M5.800 10.200h18.800" stroke="#14809c" stroke-width="1.600"/></svg></div><div class="ic" style="left:-1px;top:29px"><svg width="30" height="30" viewBox="0 0 30 30"><rect x="5.800" y="7.400" width="18.800" height="14.600" fill="#fff" stroke="#6a6a6a" stroke-width="1.400"/><path d="M5.800 10.200h18.800M15.200 10.200v11.800" stroke="#6a6a6a" stroke-width="1.400"/></svg></div></div>

<!-- CANVAS -->
<div class="abs" style="left:43px;top:85px;width:76px;height:896px;background:#cbcbcb"></div>
<svg class="abs" style="left:0;top:0" width="1920" height="1040" viewBox="0 0 1920 1040">
  <!-- page art -->
  <path d="M583.500 489.500C574 479 560 463 558.500 440C556.500 410 582 388.500 614 388.500C638 388.500 655 401 664.500 420.500L677.500 420.500C684 402 697 388.500 715.500 388.500C733 388.500 745 401 752.500 420.500L764 420.500C773 402 790 386 815.500 386C848 386 873.500 408 872.500 438C871.500 462 858 480 848.500 489Q845 492.500 848.500 496C860 506 874 520 874 543C874 575 850 598 820 598C797 598 778 584 766 563.500L763.500 561.500L669 561.500C657 585 640 599.500 615 599.500C585 599.500 559 578 559 548C559 522 572 507 583.500 496.500Q587 493 583.500 489.500z" fill="none" stroke="#a9a9f4" stroke-width="1"/>
  <g fill="#ff0000"><path d="M647 512C646 500 656 489 668.500 489C680 489 697 497 696.500 506C696 514 684 517 678 521C672 525 668 533.500 657 533.500C649 533.500 647 522 647 512z"/><ellipse cx="631" cy="479" rx="15.500" ry="10.500" transform="rotate(42 631 479)"/><ellipse cx="652" cy="465" rx="10.800" ry="15.800" transform="rotate(-14 652 465)"/><ellipse cx="678.200" cy="473.300" rx="10.500" ry="15" transform="rotate(-8 678.200 473.300)"/><ellipse cx="631.500" cy="508.500" rx="14.200" ry="11" transform="rotate(32 631.500 508.500)"/></g>
  <g fill="#ff0000" transform="translate(1431.800 0) scale(-1 1)"><path d="M647 512C646 500 656 489 668.500 489C680 489 697 497 696.500 506C696 514 684 517 678 521C672 525 668 533.500 657 533.500C649 533.500 647 522 647 512z"/><ellipse cx="631" cy="479" rx="15.500" ry="10.500" transform="rotate(42 631 479)"/><ellipse cx="652" cy="465" rx="10.800" ry="15.800" transform="rotate(-14 652 465)"/><ellipse cx="678.200" cy="473.300" rx="10.500" ry="15" transform="rotate(-8 678.200 473.300)"/><ellipse cx="631.500" cy="508.500" rx="14.200" ry="11" transform="rotate(32 631.500 508.500)"/></g>
  <!-- page edge -->
  <path d="M118.500 104.500V957" stroke="#d9414a" stroke-width="1"/>
  <!-- horizontal ruler -->
  <rect x="43" y="85" width="76" height="19.500" fill="#ececec"/>
  <rect x="119" y="85" width="1389" height="12.500" fill="#d0d0d0"/>
  <rect x="119" y="97.500" width="1389" height="6.700" fill="#e0e2e0"/>
  <rect x="1508" y="85" width="19" height="19.500" fill="#eeeeee"/>
  <path d="M119 97.500H1508" stroke="#e08d92" stroke-width=".9"/><path d="M119 100.300H1508" stroke="#ecd6d6" stroke-width=".6"/><path d="M43 85.600H1508" stroke="#e6d2d2" stroke-width=".7"/>
  <path d="M47.5 98.800v5.200M55.5 98.800v5.200M63.5 98.800v5.200M71.5 98.800v5.200M87.5 98.800v5.200M94.5 98.800v5.200M102.5 98.800v5.200M110.5 98.800v5.200M126.5 98.800v5.200M134.5 98.800v5.200M142.5 98.800v5.200M149.5 98.800v5.200M165.5 98.800v5.200M173.5 98.800v5.200M181.5 98.800v5.200M189.5 98.800v5.200M205.5 98.800v5.200M212.5 98.800v5.200M220.5 98.800v5.200M228.5 98.800v5.200M244.5 98.800v5.200M252.5 98.800v5.200M260.5 98.800v5.200M268.5 98.800v5.200M283.5 98.800v5.200M291.5 98.800v5.200M299.5 98.800v5.200M307.5 98.800v5.200M323.5 98.800v5.200M330.5 98.800v5.200M338.5 98.800v5.200M346.5 98.800v5.200M362.5 98.800v5.200M370.5 98.800v5.200M378.5 98.800v5.200M386.5 98.800v5.200M401.5 98.800v5.200M409.5 98.800v5.200M417.5 98.800v5.200M425.5 98.800v5.200M441.5 98.800v5.200M449.5 98.800v5.200M456.5 98.800v5.200M464.5 98.800v5.200M480.5 98.800v5.200M488.5 98.800v5.200M496.5 98.800v5.200M504.5 98.800v5.200M519.5 98.800v5.200M527.5 98.800v5.200M535.5 98.800v5.200M543.5 98.800v5.200M559.5 98.800v5.200M567.5 98.800v5.200M574.5 98.800v5.200M582.5 98.800v5.200M598.5 98.800v5.200M606.5 98.800v5.200M614.5 98.800v5.200M622.5 98.800v5.200M637.5 98.800v5.200M645.5 98.800v5.200M653.5 98.800v5.200M661.5 98.800v5.200M677.5 98.800v5.200M685.5 98.800v5.200M693.5 98.800v5.200M700.5 98.800v5.200M716.5 98.800v5.200M724.5 98.800v5.200M732.5 98.800v5.200M740.5 98.800v5.200M755.5 98.800v5.200M763.5 98.800v5.200M771.5 98.800v5.200M779.5 98.800v5.200M795.5 98.800v5.200M803.5 98.800v5.200M811.5 98.800v5.200M818.5 98.800v5.200M834.5 98.800v5.200M842.5 98.800v5.200M850.5 98.800v5.200M858.5 98.800v5.200M874.5 98.800v5.200M881.5 98.800v5.200M889.5 98.800v5.200M897.5 98.800v5.200M913.5 98.800v5.200M921.5 98.800v5.200M929.5 98.800v5.200M936.5 98.800v5.200M952.5 98.800v5.200M960.5 98.800v5.200M968.5 98.800v5.200M976.5 98.800v5.200M992.5 98.800v5.200M999.5 98.800v5.200M1007.5 98.800v5.200M1015.5 98.800v5.200M1031.5 98.800v5.200M1039.5 98.800v5.200M1047.5 98.800v5.200M1055.5 98.800v5.200M1070.5 98.800v5.200M1078.5 98.800v5.200M1086.5 98.800v5.200M1094.5 98.800v5.200M1110.5 98.800v5.200M1117.5 98.800v5.200M1125.5 98.800v5.200M1133.5 98.800v5.200M1149.5 98.800v5.200M1157.5 98.800v5.200M1165.5 98.800v5.200M1173.5 98.800v5.200M1188.5 98.800v5.200M1196.5 98.800v5.200M1204.5 98.800v5.200M1212.5 98.800v5.200M1228.5 98.800v5.200M1236.5 98.800v5.200M1243.5 98.800v5.200M1251.5 98.800v5.200M1267.5 98.800v5.200M1275.5 98.800v5.200M1283.5 98.800v5.200M1291.5 98.800v5.200M1306.5 98.800v5.200M1314.5 98.800v5.200M1322.5 98.800v5.200M1330.5 98.800v5.200M1346.5 98.800v5.200M1354.5 98.800v5.200M1361.5 98.800v5.200M1369.5 98.800v5.200M1385.5 98.800v5.200M1393.5 98.800v5.200M1401.5 98.800v5.200M1409.5 98.800v5.200M1424.5 98.800v5.200M1432.5 98.800v5.200M1440.5 98.800v5.200M1448.5 98.800v5.200M1464.5 98.800v5.200M1472.5 98.800v5.200M1480.5 98.800v5.200M1487.5 98.800v5.200M1503.5 98.800v5.200" stroke="#9a9a9a" stroke-width="1"/>
  <path d="M79.5 96.200v7.800M118.5 94.500v9.500M157.5 96.200v7.800M197.5 94.500v9.500M236.5 96.200v7.800M275.5 94.500v9.500M315.5 96.200v7.800M354.5 94.500v9.500M393.5 96.200v7.800M433.5 94.500v9.500M472.5 96.200v7.800M512.5 94.500v9.500M551.5 96.200v7.800M590.5 94.500v9.500M630.5 96.200v7.800M669.5 94.500v9.500M708.5 96.200v7.800M748.5 94.500v9.500M787.5 96.200v7.800M826.5 94.500v9.500M866.5 96.200v7.800M905.5 94.500v9.500M944.5 96.200v7.800M984.5 94.500v9.500M1023.5 96.200v7.800M1062.5 94.500v9.500M1102.5 96.200v7.800M1141.5 94.500v9.500M1180.5 96.200v7.800M1220.5 94.500v9.500M1259.5 96.200v7.800M1299.5 94.500v9.500M1338.5 96.200v7.800M1377.5 94.500v9.500M1417.5 96.200v7.800M1456.5 94.500v9.500M1495.5 96.200v7.800" stroke="#7c7c7c" stroke-width="1"/>
  <path d="M118.500 96v8.500" stroke="#777" stroke-width="1"/>
  <path d="M1159.500 85v19.500" stroke="#6a6a6a" stroke-width="1.200"/>
  <g font-family="Liberation Sans,sans-serif" font-size="10.500" fill="#484848" text-anchor="middle" letter-spacing="-.4"><text x="118.5" y="95">0</text><text x="197.2" y="95">10</text><text x="275.9" y="95">20</text><text x="354.6" y="95">30</text><text x="433.3" y="95">40</text><text x="512.0" y="95">50</text><text x="590.7" y="95">60</text><text x="669.4" y="95">70</text><text x="748.1" y="95">80</text><text x="826.8" y="95">90</text><text x="905.5" y="95">100</text><text x="984.2" y="95">110</text><text x="1062.9" y="95">120</text><text x="1141.6" y="95">130</text><text x="1220.3" y="95">140</text><text x="1299.0" y="95">150</text><text x="1377.7" y="95">160</text><text x="1456.4" y="95">170</text></g>
  <!-- vertical ruler -->
  <rect x="1508" y="104.500" width="19" height="876.500" fill="#e4e4e4"/>
  <rect x="1521" y="104.500" width="6" height="876.500" fill="#dddddd"/>
  <path d="M1508.500 104V981" stroke="#b9b9b9" stroke-width="1"/>
  <path d="M1508 89.5h5M1508 105.5h5M1508 113.5h5M1508 121.5h5M1508 129.5h5M1508 144.5h5M1508 152.5h5M1508 160.5h5M1508 168.5h5M1508 184.5h5M1508 192.5h5M1508 199.5h5M1508 207.5h5M1508 223.5h5M1508 231.5h5M1508 239.5h5M1508 247.5h5M1508 262.5h5M1508 270.5h5M1508 278.5h5M1508 286.5h5M1508 302.5h5M1508 310.5h5M1508 317.5h5M1508 325.5h5M1508 341.5h5M1508 349.5h5M1508 357.5h5M1508 365.5h5M1508 380.5h5M1508 388.5h5M1508 396.5h5M1508 404.5h5M1508 420.5h5M1508 428.5h5M1508 436.5h5M1508 443.5h5M1508 459.5h5M1508 467.5h5M1508 475.5h5M1508 483.5h5M1508 498.5h5M1508 506.5h5M1508 514.5h5M1508 522.5h5M1508 538.5h5M1508 546.5h5M1508 554.5h5M1508 561.5h5M1508 577.5h5M1508 585.5h5M1508 593.5h5M1508 601.5h5M1508 617.5h5M1508 624.5h5M1508 632.5h5M1508 640.5h5M1508 656.5h5M1508 664.5h5M1508 672.5h5M1508 679.5h5M1508 695.5h5M1508 703.5h5M1508 711.5h5M1508 719.5h5M1508 735.5h5M1508 742.5h5M1508 750.5h5M1508 758.5h5M1508 774.5h5M1508 782.5h5M1508 790.5h5M1508 798.5h5M1508 813.5h5M1508 821.5h5M1508 829.5h5M1508 837.5h5M1508 853.5h5M1508 860.5h5M1508 868.5h5M1508 876.5h5M1508 892.5h5M1508 900.5h5M1508 908.5h5M1508 916.5h5M1508 931.5h5M1508 939.5h5M1508 947.5h5M1508 955.5h5M1508 971.5h5M1508 979.5h5" stroke="#b2b2b2" stroke-width="1"/>
  <path d="M1508 97.5h8.500M1508 136.5h8.500M1508 176.5h8.500M1508 215.5h8.500M1508 255.5h8.500M1508 294.5h8.500M1508 333.5h8.500M1508 373.5h8.500M1508 412.5h8.500M1508 451.5h8.500M1508 491.5h8.500M1508 530.5h8.500M1508 569.5h8.500M1508 609.5h8.500M1508 648.5h8.500M1508 687.5h8.500M1508 727.5h8.500M1508 766.5h8.500M1508 805.5h8.500M1508 845.5h8.500M1508 884.5h8.500M1508 923.5h8.500M1508 963.5h8.500" stroke="#a2a2a2" stroke-width="1"/>
  <path d="M1508 752.500h19" stroke="#777" stroke-width="1"/>
  <g font-family="Liberation Sans,sans-serif" font-size="10.500" fill="#505050" text-anchor="middle" letter-spacing="-.4"><text transform="translate(1517.400 96.3) rotate(90)" x="0" y="0">0</text><text transform="translate(1517.400 175.0) rotate(90)" x="0" y="0">10</text><text transform="translate(1517.400 253.7) rotate(90)" x="0" y="0">20</text><text transform="translate(1517.400 332.4) rotate(90)" x="0" y="0">30</text><text transform="translate(1517.400 411.1) rotate(90)" x="0" y="0">40</text><text transform="translate(1517.400 489.8) rotate(90)" x="0" y="0">50</text><text transform="translate(1517.400 568.5) rotate(90)" x="0" y="0">60</text><text transform="translate(1517.400 647.2) rotate(90)" x="0" y="0">70</text><text transform="translate(1517.400 725.9) rotate(90)" x="0" y="0">80</text><text transform="translate(1517.400 804.6) rotate(90)" x="0" y="0">90</text><text transform="translate(1517.400 883.3) rotate(90)" x="0" y="0">100</text></g>
  <!-- coordinate box -->
  <rect x="51.500" y="87.500" width="64" height="14" rx="2" fill="#fff" stroke="#e2e2e2"/>
  <text x="55.500" y="98.600" font-family="Liberation Sans,sans-serif" font-size="9.600" fill="#8a8a8a" textLength="56">13,229 , 8,331</text>
  <svg overflow="hidden" style="overflow:hidden" x="43" y="85" width="10" height="15" viewBox="43 85 10 15"><text x="39.600" y="95" font-family="Liberation Sans,sans-serif" font-size="10.500" fill="#484848">0</text></svg>
  <!-- view label -->
  <rect x="52" y="107" width="182" height="14" fill="#5fd2ea"/>
  <text x="55" y="116.900" font-family="Liberation Sans,sans-serif" font-size="9.200" fill="#2c8fa9" textLength="175">VISTA DE DISEÑO CON LÍNEAS DE CORTE</text>
  <!-- frame -->
  <path d="M42.500 84V998M42 84.500H1544" stroke="#05b2db" stroke-width="1"/>
  <!-- v scrollbar -->
  <rect x="1527" y="104" width="17" height="878" fill="#ececec"/>
  <path d="M1527.500 104V982M1543.500 104V982" stroke="#05b2db" stroke-width="1"/>
  <rect x="1527" y="100" width="17" height="4" fill="#fff"/>
  <rect x="1527" y="84" width="17" height="16" fill="#05b2db"/>
  <path d="M1531.800 88.400l3.600 3.600-3.600 3.600M1536.800 88.400l3.600 3.600-3.600 3.600" fill="none" stroke="#fff" stroke-width="2.100"/>
  <rect x="1527" y="104" width="17" height="16" fill="#05b2db"/>
  <path d="M1535.500 108l5 8.500h-10z" fill="#fff"/>
  <rect x="1527" y="381" width="17" height="79" fill="#05b2db"/>
  <rect x="1527" y="966" width="17" height="16" fill="#05b2db"/>
  <path d="M1535.500 978l5-8.500h-10z" fill="#fff"/>
  <!-- h scrollbar -->
  <rect x="42" y="981" width="1486" height="17" fill="#ececec"/>
  <path d="M42 981.500H1528M42 997.500H1528" stroke="#05b2db" stroke-width="1"/>
  <rect x="42" y="981" width="16" height="17" fill="#05b2db"/>
  <path d="M45.800 989.500l8.500-5v10z" fill="#fff"/>
  <rect x="1512" y="981" width="16" height="17" fill="#05b2db"/>
  <path d="M1524.200 989.500l-8.500-5v10z" fill="#fff"/>
  <rect x="545" y="981" width="201" height="17" fill="#05b2db"/>
  <!-- tabs -->
  <path d="M42.500 981.500L52 961Q54 957.500 58 957.500H172Q176 957.500 177.800 961L186 981.500z" fill="#05b2db"/>
  <path d="M180.500 981.500L190.200 961Q192 957.500 196 957.500H297Q301 957.500 302.800 961L312 981.500z" fill="#fff" stroke="#05b2db" stroke-width="1"/>
  <text x="58.500" y="974.600" font-family="Liberation Sans,sans-serif" font-size="12.200" fill="#fff" textLength="99">Sin título-1.studio3</text>
  <text x="194.500" y="974.600" font-family="Liberation Sans,sans-serif" font-size="12.200" fill="#3c3c3c" textLength="86">grabado.studio3</text>
  <circle cx="169.700" cy="968" r="6.600" fill="#fff"/>
  <text x="169.700" y="971.600" text-anchor="middle" font-family="Liberation Sans,sans-serif" font-weight="700" font-size="11.500" fill="#05b2db">x</text>
  <circle cx="291.700" cy="968.300" r="6.600" fill="#f1f1f1"/><circle cx="291.400" cy="967.600" r="6.300" fill="#fff"/>
  <text x="291.700" y="971.200" text-anchor="middle" font-family="Liberation Sans,sans-serif" font-weight="700" font-size="11.500" fill="#05b2db">x</text>
</svg>

<div class="grp" style="left:6px;top:1004px;width:60px;height:30px"><div class="ic" style="left:-1px;top:-1px"><svg width="30" height="30" viewBox="0 0 30 30"><rect x="6.600" y="7.800" width="10.800" height="10.400" fill="none" stroke="#c9c9c9" stroke-width="1.200"/><rect x="13" y="12.800" width="10.200" height="9" fill="none" stroke="#c9c9c9" stroke-width="1.200"/><rect x="4.80" y="6.00" width="3.6" height="3.6" fill="#9fd8ea"/><rect x="21.40" y="6.00" width="3.6" height="3.6" fill="#9fd8ea"/><rect x="4.80" y="20.20" width="3.6" height="3.6" fill="#9fd8ea"/><rect x="21.40" y="20.20" width="3.6" height="3.6" fill="#9fd8ea"/></svg></div><div class="ic" style="left:29px;top:-1px"><svg width="30" height="30" viewBox="0 0 30 30"><rect x="6.400" y="7.800" width="10.800" height="9.600" fill="none" stroke="#d2d2d2" stroke-width="1.100"/><rect x="12.800" y="12.600" width="10.600" height="9.400" fill="none" stroke="#d2d2d2" stroke-width="1.100"/><rect x="4.60" y="6.00" width="3.6" height="3.6" fill="#9fd8ea"/><rect x="15.40" y="6.00" width="3.6" height="3.6" fill="#9fd8ea"/><rect x="4.60" y="15.60" width="3.6" height="3.6" fill="#9fd8ea"/><rect x="15.40" y="15.60" width="3.6" height="3.6" fill="#9fd8ea"/><rect x="11.00" y="10.80" width="3.6" height="3.6" fill="#9fd8ea"/><rect x="21.60" y="10.80" width="3.6" height="3.6" fill="#9fd8ea"/><rect x="11.00" y="20.20" width="3.6" height="3.6" fill="#9fd8ea"/><rect x="21.60" y="20.20" width="3.6" height="3.6" fill="#9fd8ea"/></svg></div></div>
<div class="grp" style="left:69px;top:1004px;width:90px;height:30px"><div class="ic" style="left:-1px;top:-1px"><svg width="30" height="30" viewBox="0 0 30 30"><rect x="6.200" y="7.600" width="15.800" height="14.200" fill="none" stroke="#14809c" stroke-width="1.300" stroke-dasharray="1.400 1.400"/><rect x="6.200" y="7.600" width="10.800" height="8.800" fill="#fff" stroke="#14809c" stroke-width="1.500"/><rect x="11.800" y="12.800" width="10.400" height="9" fill="#fff" stroke="#14809c" stroke-width="1.500"/><rect x="21" y="21.400" width="3.200" height="3.200" fill="#fff" stroke="#14809c" stroke-width="1.100"/></svg></div><div class="ic" style="left:29px;top:-1px"><svg width="30" height="30" viewBox="0 0 30 30"><rect x="6.200" y="7.400" width="10.800" height="9.400" fill="#fff" stroke="#c8dde2" stroke-width="1.200"/><rect x="12" y="12.800" width="10.600" height="9.200" fill="#fff" stroke="#b6dfe8" stroke-width="1.200"/></svg></div><div class="ic" style="left:59px;top:-1px"><svg width="30" height="30" viewBox="0 0 30 30"><rect x="6.200" y="7.400" width="10.800" height="9.400" fill="#fff" stroke="#14809c" stroke-width="1.600"/><rect x="12.200" y="12.600" width="10.400" height="9" fill="#22b2d4" stroke="#14809c" stroke-width="1.500"/><rect x="21.400" y="21.400" width="3.200" height="3.200" fill="#fff" stroke="#14809c" stroke-width="1.100"/></svg></div></div>
<div class="grp" style="left:162px;top:1004px;width:60px;height:30px"><div class="ic" style="left:-1px;top:-1px"><svg width="30" height="30" viewBox="0 0 30 30"><path d="M11 5.800l4.600 2.400v6l-4.600 2.600-4.600-2.600v-6z" fill="#fff" stroke="#c9c9c9" stroke-width="1"/><path d="M6.400 8.200l4.600 2.400 4.600-2.400M11 10.600v6" fill="none" stroke="#c9c9c9" stroke-width="1"/><path d="M18.800 10.800l5.400 2.800v6.800l-5.400 3-5.400-3v-6.800z" fill="#fff" stroke="#b7dfe8" stroke-width="1.100"/><path d="M13.400 13.600l5.400 2.800 5.400-2.800" fill="none" stroke="#b7dfe8" stroke-width="1.100"/></svg></div><div class="ic" style="left:29px;top:-1px"><svg width="30" height="30" viewBox="0 0 30 30"><path d="M6.600 6.600c5 4.400 11 10 16.800 16.600M23.400 6.200c-6 4.800-11.600 10.600-16.800 17" fill="none" stroke="#c2c2c2" stroke-width="1.100"/></svg></div></div>
<div class="grp" style="left:225px;top:1004px;width:60px;height:30px"><div class="ic" style="left:-1px;top:-1px"><svg width="30" height="30" viewBox="0 0 30 30"><rect x="6.400" y="6.600" width="8.200" height="8.200" rx="1" fill="#d2d2d2" stroke="#c4c4c4"/><rect x="15.400" y="15.400" width="8.200" height="8.200" rx="1" fill="#d8d8d8" stroke="#cccccc"/><rect x="11" y="11" width="8.200" height="8.200" fill="#fff" stroke="#d0d0d0"/></svg></div><div class="ic" style="left:29px;top:-1px"><svg width="30" height="30" viewBox="0 0 30 30"><rect x="11" y="11" width="8.200" height="8.200" fill="#fff" stroke="#d0d0d0"/><rect x="6.400" y="6.600" width="8.200" height="8.200" rx="1" fill="#d2d2d2" stroke="#c4c4c4"/><rect x="15.400" y="15.400" width="8.200" height="8.200" rx="1" fill="#d8d8d8" stroke="#cccccc"/></svg></div></div>
<div class="grp" style="left:288px;top:1004px;width:60px;height:30px"><div class="ic" style="left:-1px;top:-1px"><svg width="30" height="30" viewBox="0 0 30 30"><path d="M6.400 13.200h7c.2-4.800 4.200-7.400 8-6.400 4.200 1.200 5.400 6.400 2.600 9.600l-2.600 2.800v4h-15z" fill="#e4e4e4" stroke="#d6d6d6" stroke-width="1.200" stroke-linejoin="round"/></svg></div><div class="ic" style="left:29px;top:-1px"><svg width="30" height="30" viewBox="0 0 30 30"><circle cx="15.400" cy="15" r="8.800" fill="#fff" stroke="#4a4a4a" stroke-width="1.300"/><circle cx="15.400" cy="15" r="6.200" fill="#fff" stroke="#05b2db" stroke-width="2.200"/><ellipse cx="15.400" cy="15" rx="2.400" ry="3.400" fill="#fff" stroke="#4a4a4a" stroke-width="1.100"/></svg></div></div>
<div class="grp" style="left:351px;top:1004px;width:30px;height:30px"><div class="ic" style="left:-1px;top:-1px"><svg width="30" height="30" viewBox="0 0 30 30"><path d="M11.7 11.5l7.4 12.700h-14.900z" fill="#c6eaf3"/><path d="M20.300 9.800l2.400 2.200-9.400 8.600-2.600 1 .8-2.600z" fill="#ececec" stroke="#d2d2d2" stroke-width="1"/><circle cx="23" cy="8.300" r="3.300" fill="#ededed" stroke="#d2d2d2" stroke-width="1"/></svg></div></div>
<div class="grp" style="left:384px;top:1004px;width:30px;height:30px"><div class="ic" style="left:-1px;top:-1px"><svg width="30" height="30" viewBox="0 0 30 30"><path d="M9.600 10.800l10.400-3.800v12.600l-10.400 3.800z" fill="#fff" stroke="#3c3c3c" stroke-width="1.100" stroke-linejoin="round"/><path d="M11.600 12.200l10.200-3.600v11.800l-10.200 3.600z" fill="none" stroke="#3c3c3c" stroke-width="1.100" stroke-linejoin="round"/><path d="M12.600 12.900l6.600-2.400v8.600l-6.600 2.400z" fill="#15a6d0"/></svg></div></div>

<!-- RIGHT PANEL -->
<svg class="abs" style="left:0;top:0" width="1920" height="1040" viewBox="0 0 1920 1040" font-family="Liberation Sans,sans-serif">
<rect x="1550.5" y="84.5" width="363" height="913" fill="#fff" stroke="#05b2db" stroke-width="1"/>
<text x="1560.5" y="107.6" font-size="15" fill="#111" textLength="147.0" lengthAdjust="spacing">AJUSTES DE CORTE</text>
<path d="M1560 113.500H1868" stroke="#5a5a5a" stroke-width="1"/><path d="M1560 117.500H1904" stroke="#05b2db" stroke-width="1.400"/>
<rect x="1886" y="95" width="18" height="17" fill="#62d5ec"/>
<rect x="1868.5" y="94.5" width="35" height="17" fill="none" stroke="#05b2db" stroke-width="1"/>
<path d="M1886.500 94v18" stroke="#05b2db"/><path d="M1877.200 98.500l5 8.500h-10z" fill="#05b2db"/><path d="M1895.200 99l4.600 8h-9.200z" fill="none" stroke="#c9688a" stroke-width="1"/>
<rect x="1568.5" y="136.5" width="327" height="795" fill="#fff" stroke="#05b2db" stroke-width="1"/>
<rect x="1879" y="137" width="17" height="794" fill="#ececec"/>
<rect x="1879" y="137" width="17" height="640" fill="#05b2db"/>
<path d="M1879.500 777V916" stroke="#05b2db"/><path d="M1895.500 137V931" stroke="#05b2db"/><path d="M1887.500 140.500l5 8.500h-10z" fill="#fff"/><rect x="1879" y="916" width="17" height="16" fill="#05b2db"/>
<path d="M1887.500 928l5-8.500h-10z" fill="#fff"/>
<rect x="1569" y="137" width="310" height="27" fill="#dfdfdf"/>
<circle cx="1583.7" cy="150" r="9.300" fill="#e6e6e6" stroke="#9a9a9a" stroke-width="1.300"/><path d="M1578.7 146.4h10l-5 8.800z" fill="#8a8a8a"/>
<text x="1600" y="154.4" font-size="12.5" font-weight="700" fill="#757575" textLength="116.0" lengthAdjust="spacing">Condiciones de corte</text>
<rect x="1569" y="169" width="310" height="15" fill="#dfdfdf"/>
<text x="1576.5" y="180" font-size="10" fill="#8a8a8a" textLength="65.0" lengthAdjust="spacing">Modo de corte</text>
<circle cx="1583.700" cy="203" r="9.300" fill="#fff" stroke="#05b2db" stroke-width="1.200"/>
<text x="1598" y="207.6" font-size="12" fill="#1a1a1a" textLength="45.0" lengthAdjust="spacing">Estándar</text>
<circle cx="1583.700" cy="236.200" r="9.900" fill="#05b2db"/><path d="M1579 236.400l3.400 3.400 6.400-6.800" fill="none" stroke="#fff" stroke-width="1.650" stroke-linecap="round" stroke-linejoin="round"/>
<text x="1598" y="240.8" font-size="12" fill="#1a1a1a" textLength="51.5" lengthAdjust="spacing">Avanzado</text>
<rect x="1569" y="256" width="310" height="16" fill="#dfdfdf"/>
<text x="1576.5" y="268" font-size="10" fill="#8a8a8a" textLength="66.5" lengthAdjust="spacing">Orden de corte</text>
<rect x="1674" y="279" width="98" height="34" fill="#62d5ec"/>
<rect x="1576.5" y="278.5" width="295" height="35" fill="none" stroke="#05b2db" stroke-width="1"/>
<path d="M1674.500 278v36M1771.500 278v36" stroke="#05b2db"/>
<path d="M1586.500 291l10.500-5.500v15.500l-10.500 5.500z" fill="#fff" stroke="#222" stroke-width="1.100" stroke-linejoin="round"/><path d="M1590.500 292.500l11-6v16l-11 5.500z" fill="none" stroke="#222" stroke-width="1.100" stroke-linejoin="round"/><path d="M1591.500 293.500l7.500-4v11.500l-7.500 4z" fill="#17a3cb"/>
<text x="1610.1" y="301" font-size="11.5" font-weight="700" fill="#5d7885" textLength="26.0" lengthAdjust="spacing">Capa</text>
<rect x="1680.500" y="285.500" width="17" height="16" fill="none" stroke="#25acd0" stroke-width="1.500"/><circle cx="1693.200" cy="297.400" r="8.600" fill="none" stroke="#25acd0" stroke-width="1.500"/>
<svg overflow="hidden" style="overflow:hidden" x="1700" y="279" width="71" height="34" viewBox="1700 279 71 34"><text x="1708.7" y="301" font-size="11.5" font-weight="700" fill="#1d8fac" textLength="71.9" lengthAdjust="spacing">Color de línea</text>
</svg>
<rect x="1779" y="284" width="18.300" height="18.300" fill="#7edbee"/><circle cx="1792.500" cy="297.800" r="10.300" fill="#05b2db"/>
<svg overflow="hidden" style="overflow:hidden" x="1800" y="279" width="71" height="34" viewBox="1800 279 71 34"><text x="1807.4" y="301" font-size="11.5" font-weight="700" fill="#5d7885" textLength="82.7" lengthAdjust="spacing">Color de relleno</text>
</svg>
<rect x="1577" y="321" width="294" height="21" fill="#dfdfdf"/>
<rect x="1577" y="375" width="294" height="30" fill="#62d5ec"/>
<rect x="1576.5" y="320.5" width="295" height="119" fill="none" stroke="#05b2db" stroke-width="1"/>
<path d="M1577 342.500h294M1761.500 321v118" stroke="#6a6a6a" stroke-width="1.100"/><path d="M1577 375.500h294M1577 404.500h294" stroke="#05b2db" stroke-width="1"/>
<text x="1668.5" y="336" font-size="10" text-anchor="middle" fill="#8a8a8a" textLength="23.5" lengthAdjust="spacing">Color</text>
<text x="1820" y="336" font-size="10" text-anchor="middle" fill="#8a8a8a" textLength="34.5" lengthAdjust="spacing">Material</text>
<rect x="1581.5" y="350.5" width="19" height="19" fill="#fff" stroke="#05b2db" stroke-width="1"/>
<rect x="1607.5" y="350.5" width="19" height="19" fill="none" stroke="#05b2db" stroke-width="1"/>
<rect x="1610.5" y="359" width="10" height="7.500" fill="#d6d6d6" stroke="#2fb3d3" stroke-width="1"/><circle cx="1620" cy="357.5" r="4.200" fill="none" stroke="#2fb3d3" stroke-width="1.100"/>
<rect x="1633.5" y="350.5" width="19" height="19" fill="#0000ff" stroke="#05b2db" stroke-width="1"/>
<text x="1659.5" y="365.4" font-size="11.8" fill="#6a6a6a" textLength="80.0" lengthAdjust="spacing">RGB (10,10,255)</text>
<svg overflow="hidden" style="overflow:hidden" x="1762" y="343" width="109" height="96" viewBox="1762 343 109 96"><text x="1766.3" y="363.5" font-size="11.5" font-weight="700" fill="#54626b" textLength="113.5" lengthAdjust="spacing">Cartulina blanca N165</text>
<text x="1766.3" y="393.7" font-size="11.5" font-weight="700" fill="#1787a4" textLength="141.0" lengthAdjust="spacing">Pluma de boceto Silhouette</text>
</svg>
<rect x="1581" y="380" width="20" height="20" fill="#05b2db"/>
<path d="M1586 390.2l3.400 3.400 6.600-7" fill="none" stroke="#fff" stroke-width="1.650" stroke-linecap="round" stroke-linejoin="round"/>
<rect x="1607.5" y="380.5" width="19" height="19" fill="none" stroke="#05b2db" stroke-width="1"/>
<rect x="1610.5" y="389" width="10" height="7.500" fill="#d6d6d6" stroke="#2fb3d3" stroke-width="1"/><circle cx="1620" cy="387.5" r="4.200" fill="none" stroke="#2fb3d3" stroke-width="1.100"/>
<rect x="1633.5" y="380.5" width="19" height="19" fill="#9c5569" stroke="#2fb3d3" stroke-width="1"/>
<text x="1659.5" y="395.4" font-size="11.8" fill="#1b8eab" textLength="68.0" lengthAdjust="spacing">RGB (244,0,0)</text>
<rect x="1569" y="453" width="310" height="15" fill="#dfdfdf"/>
<text x="1576.5" y="464" font-size="10" fill="#8a8a8a" textLength="255.4" lengthAdjust="spacing">Tipo de Material (Color de línea actualmente seleccionado)</text>
<rect x="1574.5" y="474.5" width="299" height="149" fill="#fff" stroke="#05b2db" stroke-width="1"/>
<text x="1584.3" y="487.9" font-size="11.5" font-weight="700" fill="#4f6a78" textLength="56.7" lengthAdjust="spacing">Papel Kraft</text>
<text x="1584.3" y="500.0" font-size="10" fill="#808080" textLength="134.8" lengthAdjust="spacing">Papel Kraft adhesivo Silhouette</text>
<text x="1584.3" y="517.9" font-size="11.5" font-weight="700" fill="#4f6a78" textLength="136.5" lengthAdjust="spacing">Papel magnético adhesivo</text>
<text x="1584.3" y="530.0" font-size="10" fill="#808080" textLength="72.6" lengthAdjust="spacing">Marca Silhouette</text>
<text x="1584.3" y="547.9" font-size="11.5" font-weight="700" fill="#4f6a78" textLength="59.8" lengthAdjust="spacing">Papel vitela</text>
<text x="1584.3" y="560.0" font-size="10" fill="#808080" textLength="72.6" lengthAdjust="spacing">Marca Silhouette</text>
<text x="1584.3" y="577.9" font-size="11.5" font-weight="700" fill="#4f6a78" textLength="63.6" lengthAdjust="spacing">Papel Washi</text>
<text x="1584.3" y="590.0" font-size="10" fill="#808080" textLength="72.6" lengthAdjust="spacing">Marca Silhouette</text>
<rect x="1575" y="594.5" width="282" height="29" fill="#62d5ec" stroke="#05b2db" stroke-width="1"/>
<text x="1584.3" y="607.9" font-size="11.5" font-weight="700" fill="#1787a4" textLength="143.9" lengthAdjust="spacing">Pluma de boceto Silhouette</text>
<text x="1584.3" y="620" font-size="10" fill="#2797b3" textLength="72.6" lengthAdjust="spacing">Marca Silhouette</text>
<rect x="1857" y="475" width="16" height="148" fill="#ececec"/>
<path d="M1857.500 475v148" stroke="#05b2db"/><rect x="1857" y="475" width="16" height="15" fill="#05b2db"/>
<path d="M1865.200 478l5 8.500h-10z" fill="#fff"/><rect x="1857" y="554" width="16" height="19" fill="#05b2db"/>
<rect x="1857" y="608" width="16" height="15" fill="#05b2db"/>
<path d="M1865.200 620.500l5-8.500h-10z" fill="#fff"/><rect x="1810" y="607" width="47" height="16" fill="#fff"/>
<path d="M1815.200 616h11M1820.700 610.500v11M1841.200 616h11" stroke="#05b2db" stroke-width="1.500"/>
<rect x="1569" y="632" width="310" height="26" fill="#dfdfdf"/>
<circle cx="1583.7" cy="644" r="9.300" fill="#e6e6e6" stroke="#9a9a9a" stroke-width="1.300"/><path d="M1578.7 640.4h10l-5 8.800z" fill="#8a8a8a"/>
<text x="1600.2" y="648" font-size="12.5" font-weight="700" fill="#7a7a7a" textLength="211.0" lengthAdjust="spacing">Editando : Pluma de boceto Silhouette</text>
<rect x="1566" y="588" width="302" height="42" fill="none" stroke="#ff0000" stroke-width="4"/>
<rect x="1569" y="662" width="310" height="16" fill="#dfdfdf"/>
<text x="1576" y="675" font-size="10" fill="#8a8a8a" textLength="153.0" lengthAdjust="spacing">Tipo de cuchilla : Pluma de boceto</text>
<rect x="1576.5" y="684.5" width="107" height="119" fill="#fff" stroke="#05b2db" stroke-width="1"/>
<defs><linearGradient id="pg1" x1="0" y1="0" x2="1" y2="0"><stop offset="0" stop-color="#d8d8d8"/><stop offset=".1" stop-color="#f6f6f6"/><stop offset=".3" stop-color="#ffffff"/><stop offset=".6" stop-color="#cfcfcf"/><stop offset="1" stop-color="#8f8f8f"/></linearGradient>
<linearGradient id="pg2" x1="0" y1="0" x2="1" y2="0"><stop offset="0" stop-color="#3a3a3a"/><stop offset=".3" stop-color="#e8e8e8"/><stop offset=".5" stop-color="#b09a50"/><stop offset=".65" stop-color="#222"/><stop offset="1" stop-color="#888"/></linearGradient></defs>
<path d="M1612.800 704.200c11-1 23-1 34 0v34c0 10-3.600 17.400-10.600 22.200h-12.800c-7-4.800-10.600-12.200-10.600-22.200z" fill="url(#pg1)"/>
<path d="M1623.800 760.200h11.200c.4 8-2 15.600-5.600 22.600-3.600-7-6-14.600-5.600-22.600z" fill="url(#pg2)"/>
<text x="1692" y="703.6" font-size="10.3" fill="#111" textLength="180.0" lengthAdjust="spacing" word-spacing="0">Rotulador de punta redonda, para trazar</text>
<text x="1692" y="714.6" font-size="10.3" fill="#111" textLength="41.0" lengthAdjust="spacing">con tinta.</text>
<rect x="1692.5" y="768.5" width="179" height="35" fill="#fff" stroke="#05b2db" stroke-width="1"/>
<path d="M1701.800 771.400c5.600-.6 11.200-.6 16.800 0v10c0 5-1.800 8.600-5.200 11h-6.400c-3.400-2.400-5.200-6-5.200-11z" fill="url(#pg1)"/><path d="M1708.400 792.400h3.600c.2 2.600-.6 5-1.800 7.200-1.200-2.200-2-4.600-1.800-7.200z" fill="#222"/>
<text x="1726.2" y="790.4" font-size="11.5" font-weight="700" fill="#5d7885" textLength="87.7" lengthAdjust="spacing">Pluma de boceto</text>
<path d="M1840.500 773v25M1842.800 773v25" stroke="#d2d2d2" stroke-width="1"/><path d="M1850.200 782h9.200l-4.600 7.600z" fill="#808080"/>
<text x="1574.6" y="827.8" font-size="12" fill="#111" textLength="51.0" lengthAdjust="spacing">Velocidad</text>
<rect x="1666.5" y="812.5" width="103" height="21" fill="#fff" stroke="#05b2db" stroke-width="1"/>
<path d="M1766.500 813v12" stroke="#ee1c24" stroke-width="1.200"/><path d="M1760.500 833l6.500-9 2 2.500v6.500z" fill="#05b2db"/>
<rect x="1777.5" y="812.5" width="57" height="21" fill="#fff" stroke="#05b2db" stroke-width="1"/>
<text x="1779.8" y="828.6" font-size="12" fill="#111" textLength="12.4" lengthAdjust="spacing">10</text>
<rect x="1836" y="812" width="10" height="22" fill="#05b2db"/>
<path d="M1841 816l2.800 4.600h-5.600zM1841 830.6l2.800-4.600h-5.600z" fill="#dff4fa"/>
<text x="1850.5" y="821" font-size="12" fill="#111" textLength="20.0" lengthAdjust="spacing">cm/</text>
<text x="1850.5" y="834.3" font-size="12" fill="#111">s</text>
<text x="1574.6" y="860.6" font-size="12" fill="#111" textLength="34.5" lengthAdjust="spacing">Grosor</text>
<rect x="1666.5" y="846.5" width="103" height="21" fill="#fff" stroke="#05b2db" stroke-width="1"/>
<path d="M1766.500 847v12" stroke="#ee1c24" stroke-width="1.200"/><path d="M1760.500 867l6.500-9 2 2.500v6.500z" fill="#05b2db"/>
<rect x="1777.5" y="846.5" width="57" height="21" fill="#fff" stroke="#05b2db" stroke-width="1"/>
<text x="1779.8" y="862.6" font-size="12" fill="#111" textLength="12.4" lengthAdjust="spacing">33</text>
<rect x="1836" y="846" width="10" height="22" fill="#05b2db"/>
<path d="M1841 850l2.800 4.600h-5.600zM1841 864.6l2.800-4.600h-5.600z" fill="#dff4fa"/>
<text x="1574.6" y="893.7" font-size="12" fill="#111" textLength="61.2" lengthAdjust="spacing">Corte doble</text>
<rect x="1749" y="879" width="20" height="20" fill="#05b2db"/>
<path d="M1754 889.2l3.400 3.400 6.600-7" fill="none" stroke="#fff" stroke-width="1.650" stroke-linecap="round" stroke-linejoin="round"/>
<text x="1574.6" y="926.6" font-size="12" fill="#111" textLength="110.2" lengthAdjust="spacing">Optimización de ruta</text>
<path d="M1749.500 931V912.500h19V931" fill="#fff" stroke="#05b2db"/>
<rect x="1568.5" y="938.5" width="327" height="35" fill="#fff" stroke="#05b2db" stroke-width="1"/>
<text x="1729.9" y="960.8" font-size="11.5" font-weight="700" text-anchor="middle" fill="#5d7885" textLength="97.0" lengthAdjust="spacing">Enviar a Silhouette</text>
<g transform="translate(1878 1019.900) scale(.93)"><path d="M-1.600-9.400h3.200l.5 2.300 1.700.7 2-1.300 2.200 2.200-1.300 2 .7 1.700 2.300.5v3.200l-2.300.5-.7 1.700 1.300 2-2.200 2.200-2-1.300-1.700.7-.5 2.300h-3.200l-.5-2.300-1.700-.7-2 1.300-2.200-2.200 1.300-2-.7-1.700-2.300-.5v-3.200l2.300-.5.700-1.700-1.300-2 2.200-2.200 2 1.300 1.700-.7z" fill="#1ba9d5"/><circle cx="0" cy="0" r="3.600" fill="#fff"/></g>
<g transform="translate(1901.500 1019.800)" fill="none" stroke-width="2.900"><path d="M-4.200-6.200A7.400 7.400 0 0 0 -6.600 3.600" stroke="#0d6f8c"/><path d="M-9.800 2.600l5.800 2.400-2.800 3.200z" fill="#0d6f8c" stroke="none"/><path d="M.4-7.600A7.400 7.400 0 0 1 7.400-.6" stroke="#10a6d4"/><path d="M1.800-10.800v6.200l-4.800-3.400z" fill="#10a6d4" stroke="none"/><path d="M-3.200 6.600A7.400 7.400 0 0 0 5.600 4.800" stroke="#4ec8e6"/><path d="M8.200 2l-.4 6-4.600-3.600z" fill="#4ec8e6" stroke="none"/></g>
</svg>

</body>
</html>
